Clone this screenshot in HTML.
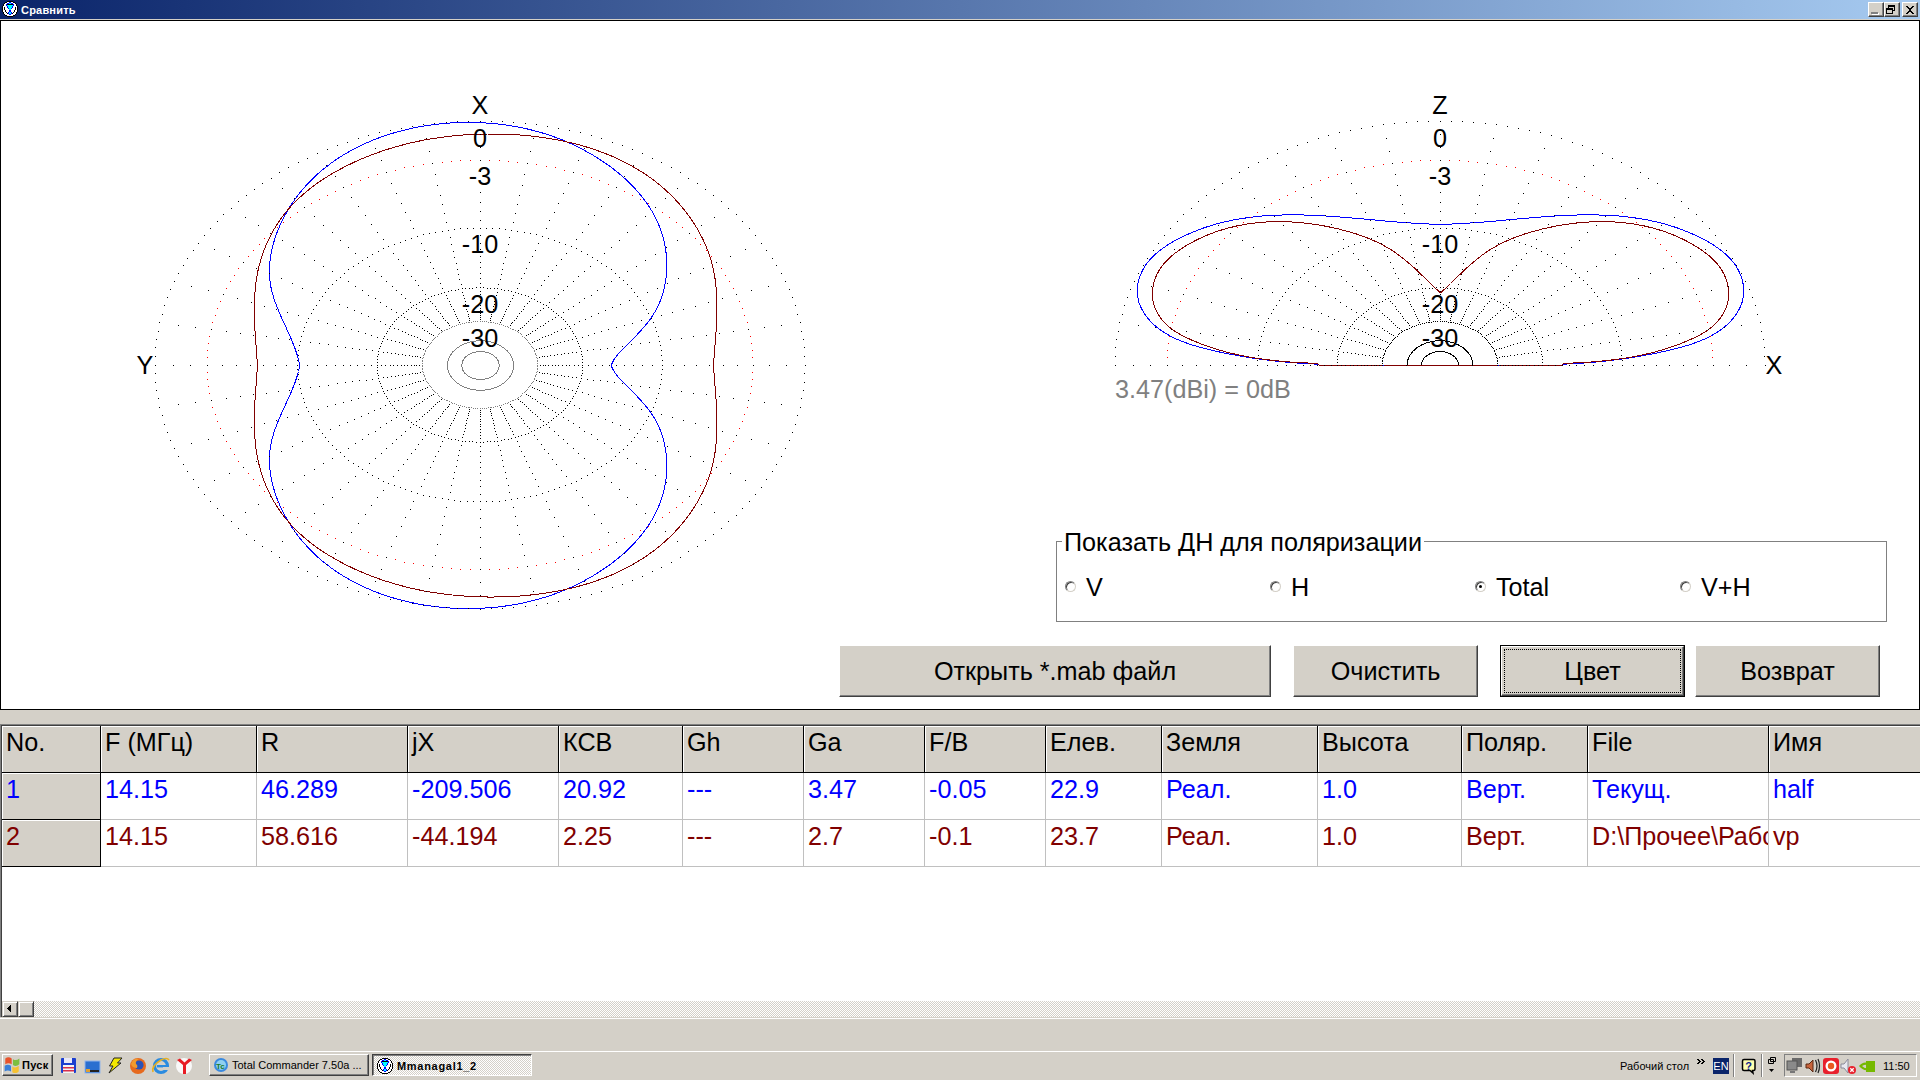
<!DOCTYPE html>
<html><head><meta charset="utf-8"><title>compare</title>
<style>
html,body{margin:0;padding:0}
body{width:1920px;height:1080px;overflow:hidden;background:#d4d0c8;position:relative;font-family:"Liberation Sans",sans-serif;color:#000}
div,span{box-sizing:border-box}
.abs{position:absolute}
#title{position:absolute;left:0;top:0;width:1920px;height:19px;background:linear-gradient(90deg,#0a246a 0%,#a6caf0 100%)}
#title .t{position:absolute;left:21px;top:3px;font-size:11px;font-weight:bold;color:#fff;line-height:14px;letter-spacing:0.2px}
#panel{position:absolute;left:0;top:20px;width:1920px;height:690px;background:#fff;border:1px solid #000}
.plot{position:absolute;left:0;top:0}
.lbl{position:absolute;font-size:25.2px;line-height:24px;white-space:nowrap}
.btn{position:absolute;background:#d4d0c8;font-size:25.2px;line-height:24px;text-align:center;
 border-top:1px solid #fff;border-left:1px solid #fff;border-right:1px solid #404040;border-bottom:1px solid #404040;
 box-shadow:inset -1px -1px 0 #808080}
.grid{position:absolute;left:0;top:724px;width:1920px;height:293px;background:#fff}
.grid:before{content:"";position:absolute;left:0;top:0;right:0;bottom:0;border-top:1px solid #808080;border-left:1px solid #808080}
.grid:after{content:"";position:absolute;left:1px;top:1px;right:0;bottom:0;border-top:1px solid #404040;border-left:1px solid #404040}
.grid>div{position:absolute}

.cb{position:absolute;top:2px;width:16px;height:15px;background:#d4d0c8;border-top:1px solid #fff;border-left:1px solid #fff;border-right:1px solid #404040;border-bottom:1px solid #404040;box-shadow:inset -1px -1px 0 #808080}
.cb svg{position:absolute;left:0;top:0}
.gb{position:absolute;left:1056px;top:541px;width:831px;height:81px;border:1px solid #808080}
.gbc{background:#fff;padding:0 2px}
.radio{position:absolute;width:11px;height:11px;border-radius:50%;background:#fff;border:1px solid #808080;border-right-color:#d4d0c8;border-bottom-color:#d4d0c8;box-shadow:inset 1px 1px 0 #404040}
.radio i{position:absolute;left:3px;top:3px;width:3px;height:3px;border-radius:50%;background:#000;display:block}
.btn span{position:absolute;left:0;right:0;top:13px}
.btn b{position:absolute;left:2px;top:2px;right:2px;bottom:2px;border:1px dotted #000;display:block}
.btnfocus{position:absolute;background:#000}
.hc{top:2px;height:46px;background:#d4d0c8;font-size:25.2px;line-height:24px;padding:3px 0 0 3px;white-space:nowrap;overflow:hidden;
 border-top:1px solid #fff;border-left:1px solid #fff;box-shadow:1px 0 0 #000,0 1px 0 #000,1px 1px 0 #000}
.fc{left:2px;width:98px;height:46px;background:#d4d0c8;font-size:25.2px;line-height:24px;padding:3px 0 0 3px;border-top:1px solid #fff;border-left:1px solid #fff;box-shadow:1px 0 0 #000,0 1px 0 #000,1px 1px 0 #000}
.dc{height:47px;background:#fff;font-size:25.2px;line-height:24px;padding:4px 0 0 4px;white-space:nowrap;overflow:hidden;border-right:1px solid #c0c0c0;border-bottom:1px solid #c0c0c0}
.sbar{position:absolute;left:2px;top:1001px;width:1918px;height:16px;background:#eae8e3;
 background-image:repeating-conic-gradient(#fff 0% 25%,#d4d0c8 0% 50%);background-size:2px 2px}
.sbtn{position:absolute;top:1001px;width:16px;height:16px;background:#d4d0c8;border-top:1px solid #d4d0c8;border-left:1px solid #d4d0c8;border-right:1px solid #404040;border-bottom:1px solid #404040;box-shadow:inset 1px 1px 0 #fff,inset -1px -1px 0 #808080}
.sbtn svg{position:absolute;left:-1px;top:0}
.wline{position:absolute;left:0;width:1920px;height:1px;background:#fff}
#tb{position:absolute;left:0;top:0;width:1920px;height:1080px;pointer-events:none}
#tb:before{content:"";position:absolute;left:0;top:1051px;width:1920px;height:1px;background:#fff}
.start{position:absolute;left:2px;top:1054px;width:51px;height:22px;background:#d4d0c8;border-top:1px solid #fff;border-left:1px solid #fff;border-right:1px solid #404040;border-bottom:1px solid #404040;box-shadow:inset -1px -1px 0 #808080}
.start span{position:absolute;left:19px;top:3px;font-size:11px;font-weight:bold;line-height:14px;letter-spacing:0.3px}
.ql{position:absolute;left:60px;top:1055px}
.tbtn{position:absolute;top:1054px;height:22px;background:#d4d0c8;border-top:1px solid #fff;border-left:1px solid #fff;border-right:1px solid #404040;border-bottom:1px solid #404040;box-shadow:inset -1px -1px 0 #808080}
.tbtn span{position:absolute;left:22px;top:3px;font-size:11px;line-height:14px;white-space:nowrap}
.tbtn.act{border-top:1px solid #404040;border-left:1px solid #404040;border-right:1px solid #fff;border-bottom:1px solid #fff;box-shadow:inset 1px 1px 0 #808080;background:#eae8e3;background-image:repeating-conic-gradient(#fff 0% 25%,#d4d0c8 0% 50%);background-size:2px 2px}
.tbtn.act span{font-weight:bold;top:4px;left:24px;letter-spacing:0.7px}
.tt{position:absolute;top:1059px;font-size:11px;line-height:14px;white-space:nowrap}
.en{position:absolute;left:1713px;top:1058px;width:16px;height:16px;background:#0a246a;color:#fff;font-size:11px;line-height:16px;text-align:center}
.sep{position:absolute;top:1054px;width:2px;height:23px;border-left:1px solid #808080;border-right:1px solid #fff}
.tray{position:absolute;left:1784px;top:1054px;width:133px;height:23px;border-top:1px solid #808080;border-left:1px solid #808080;border-right:1px solid #fff;border-bottom:1px solid #fff}
</style></head><body>
<div id="title"><svg width="16" height="16" viewBox="0 0 16 16" style="position:absolute;left:2px;top:1px"><g shape-rendering="crispEdges"><path d="M5 0h6v1h-6zM3 1h2v1h-2zM11 1h2v1h-2zM2 2h1v1h-1zM13 2h1v1h-1zM1 3h1v1h-1zM5 3h6v1h-6zM14 3h1v1h-1zM1 4h1v1h-1zM14 4h1v1h-1zM0 5h1v1h-1zM15 5h1v1h-1zM0 6h1v1h-1zM2 6h1v1h-1zM13 6h1v1h-1zM15 6h1v1h-1zM0 7h1v1h-1zM2 7h1v1h-1zM13 7h1v1h-1zM15 7h1v1h-1zM0 8h1v1h-1zM2 8h1v1h-1zM13 8h1v1h-1zM15 8h1v1h-1zM0 9h1v1h-1zM3 9h1v1h-1zM12 9h1v1h-1zM15 9h1v1h-1zM0 10h1v1h-1zM3 10h1v1h-1zM12 10h1v1h-1zM15 10h1v1h-1zM1 11h1v1h-1zM4 11h1v1h-1zM11 11h1v1h-1zM14 11h1v1h-1zM1 12h1v1h-1zM5 12h1v1h-1zM10 12h1v1h-1zM14 12h1v1h-1zM2 13h1v1h-1zM13 13h1v1h-1zM3 14h2v1h-2zM11 14h2v1h-2zM5 15h6v1h-6z" fill="#000"/><path d="M5 1h2v1h-2zM9 1h2v1h-2zM3 2h2v1h-2zM11 2h2v1h-2zM2 3h2v1h-2zM12 3h2v1h-2zM2 4h2v1h-2zM12 4h2v1h-2zM1 5h4v1h-4zM11 5h4v1h-4zM1 6h1v1h-1zM3 6h2v1h-2zM11 6h2v1h-2zM14 6h1v1h-1zM1 7h1v1h-1zM3 7h3v1h-3zM10 7h3v1h-3zM14 7h1v1h-1zM1 8h1v1h-1zM3 8h4v1h-4zM9 8h4v1h-4zM14 8h1v1h-1zM1 9h2v1h-2zM4 9h3v1h-3zM9 9h3v1h-3zM13 9h2v1h-2zM1 10h2v1h-2zM4 10h3v1h-3zM9 10h3v1h-3zM13 10h2v1h-2zM2 11h2v1h-2zM5 11h1v1h-1zM10 11h1v1h-1zM12 11h2v1h-2zM2 12h3v1h-3zM11 12h3v1h-3zM3 13h4v1h-4zM9 13h4v1h-4zM5 14h6v1h-6z" fill="#fff"/><path d="M7 1h2v1h-2zM5 2h2v1h-2zM9 2h2v1h-2zM4 3h1v1h-1zM11 3h1v1h-1zM4 4h1v1h-1zM11 4h1v1h-1zM5 5h1v1h-1zM10 5h1v1h-1zM5 6h1v1h-1zM10 6h1v1h-1zM6 7h1v1h-1zM9 7h1v1h-1zM7 9h2v1h-2zM7 10h2v1h-2zM6 11h1v1h-1zM9 11h1v1h-1zM6 12h1v1h-1zM9 12h1v1h-1zM7 13h2v1h-2z" fill="#00f"/><path d="M7 2h2v1h-2zM5 4h6v1h-6zM6 5h4v1h-4zM6 6h4v1h-4zM7 7h2v1h-2zM7 8h2v1h-2zM7 11h2v1h-2zM7 12h2v1h-2z" fill="#0ff"/></g></svg><span class="t">Сравнить</span>
<div class="cb" style="left:1868px"><svg width="14" height="13" viewBox="0 0 14 13" shape-rendering="crispEdges"><path d="M3 10h7v2h-7z" fill="#fff"/><path d="M2 9h7v2h-7z" fill="#808080"/></svg></div>
<div class="cb" style="left:1884px"><svg width="14" height="13" viewBox="0 0 14 13" shape-rendering="crispEdges"><path d="M3 2h7v6h-7z" fill="#000"/><path d="M4 4h5v3h-5z" fill="#d4d0c8"/><path d="M1 5h7v6h-7z" fill="#000"/><path d="M2 7h5v3h-5z" fill="#d4d0c8"/></svg></div>
<div class="cb" style="left:1902px"><svg width="14" height="13" viewBox="0 0 14 13" shape-rendering="crispEdges"><path d="M3 3h1v1h-1zM4 3h1v1h-1zM9 3h1v1h-1zM10 3h1v1h-1zM4 4h1v1h-1zM5 4h1v1h-1zM8 4h1v1h-1zM9 4h1v1h-1zM5 5h1v1h-1zM6 5h1v1h-1zM7 5h1v1h-1zM8 5h1v1h-1zM6 6h1v1h-1zM7 6h1v1h-1zM6 7h1v1h-1zM7 7h1v1h-1zM5 8h1v1h-1zM6 8h1v1h-1zM7 8h1v1h-1zM8 8h1v1h-1zM4 9h1v1h-1zM5 9h1v1h-1zM8 9h1v1h-1zM9 9h1v1h-1zM3 10h1v1h-1zM4 10h1v1h-1zM9 10h1v1h-1zM10 10h1v1h-1z" fill="#000"/></svg></div>
</div>
<div id="panel">
<svg class="plot" width="1918" height="688" viewBox="1 21 1918 688" shape-rendering="crispEdges">
<path d="M299.8 365.5L299.2 362.5L298.5 359.5L297.6 356.5L296.7 353.5L295.7 350.6L294.7 347.6L293.5 344.6L292.3 341.7L291.1 338.7L289.8 335.8L288.5 332.8L287.1 329.9L285.8 326.9L284.4 323.9L283.1 321.0L281.7 318.0L280.4 315.0L279.1 312.1L277.9 309.1L276.7 306.1L275.5 303.1L274.5 300.1L273.5 297.0L272.6 294.0L271.8 290.9L271.1 287.9L270.5 284.8L270.1 281.6L269.8 278.5L269.5 275.4L269.4 272.2L269.5 269.1L269.6 265.9L269.8 262.8L270.2 259.6L270.6 256.4L271.1 253.3L271.8 250.1L272.5 247.0L273.3 243.9L274.2 240.8L275.2 237.7L276.2 234.6L277.4 231.6L278.6 228.6L279.9 225.6L281.2 222.6L282.6 219.7L284.1 216.8L285.7 214.0L287.3 211.2L288.9 208.4L290.6 205.7L292.4 203.0L294.2 200.4L296.0 197.8L297.9 195.3L299.9 192.8L301.8 190.4L303.9 188.0L306.0 185.7L308.1 183.4L310.3 181.1L312.5 178.9L314.7 176.7L317.0 174.6L319.4 172.5L321.7 170.5L324.1 168.5L326.6 166.6L329.1 164.7L331.6 162.8L334.1 161.0L336.7 159.2L339.3 157.5L342.0 155.8L344.7 154.2L347.4 152.6L350.1 151.0L352.9 149.5L355.7 148.1L358.5 146.6L361.4 145.3L364.3 143.9L367.2 142.6L370.1 141.4L373.0 140.1L376.0 139.0L379.0 137.8L382.0 136.7L385.0 135.7L388.1 134.7L391.2 133.7L394.2 132.8L397.3 131.9L400.5 131.1L403.6 130.3L406.7 129.5L409.9 128.8L413.0 128.1L416.2 127.4L419.4 126.8L422.6 126.3L425.8 125.7L429.0 125.2L432.2 124.8L435.5 124.4L438.7 124.0L441.9 123.7L445.2 123.4L448.4 123.1L451.6 122.9L454.9 122.8L458.1 122.6L461.4 122.5L464.6 122.4L467.8 122.4L471.1 122.4L474.3 122.5L477.5 122.6L480.7 122.7L483.9 122.9L487.1 123.1L490.3 123.3L493.5 123.6L496.7 123.9L499.9 124.2L503.0 124.6L506.2 125.1L509.3 125.5L512.4 126.0L515.6 126.6L518.7 127.1L521.8 127.8L524.8 128.4L527.9 129.1L531.0 129.9L534.0 130.6L537.1 131.5L540.1 132.3L543.1 133.2L546.1 134.1L549.1 135.1L552.1 136.1L555.1 137.2L558.0 138.3L560.9 139.4L563.9 140.6L566.8 141.8L569.7 143.1L572.5 144.4L575.4 145.8L578.2 147.1L581.1 148.6L583.9 150.1L586.6 151.6L589.4 153.1L592.2 154.7L594.9 156.4L597.6 158.1L600.3 159.8L603.0 161.6L605.7 163.4L608.3 165.2L610.9 167.1L613.5 169.1L616.0 171.1L618.5 173.1L621.0 175.2L623.4 177.3L625.8 179.4L628.1 181.6L630.4 183.9L632.7 186.2L634.9 188.5L637.0 190.9L639.1 193.3L641.1 195.7L643.1 198.2L645.0 200.7L646.8 203.3L648.6 205.9L650.3 208.6L652.0 211.3L653.5 214.0L655.0 216.8L656.4 219.6L657.7 222.5L659.0 225.4L660.1 228.3L661.2 231.3L662.2 234.3L663.1 237.4L663.9 240.5L664.6 243.6L665.2 246.8L665.7 250.0L666.1 253.2L666.4 256.4L666.6 259.6L666.7 262.9L666.8 266.1L666.7 269.3L666.5 272.6L666.2 275.8L665.9 279.0L665.4 282.2L664.8 285.4L664.1 288.5L663.3 291.6L662.4 294.7L661.4 297.7L660.3 300.7L659.1 303.6L657.8 306.5L656.4 309.3L654.8 312.1L653.2 314.7L651.5 317.4L649.7 319.9L647.7 322.5L645.8 324.9L643.7 327.3L641.6 329.7L639.5 332.1L637.3 334.4L635.1 336.7L632.8 339.0L630.6 341.3L628.3 343.5L626.0 345.8L623.8 348.1L621.5 350.3L619.4 352.6L617.4 355.0L615.5 357.4L613.8 360.0L612.4 362.7L611.2 365.5L612.4 368.3L613.8 371.0L615.5 373.6L617.4 376.0L619.4 378.4L621.5 380.7L623.8 382.9L626.0 385.2L628.3 387.5L630.6 389.7L632.8 392.0L635.1 394.3L637.3 396.6L639.5 398.9L641.6 401.3L643.7 403.7L645.8 406.1L647.7 408.5L649.7 411.1L651.5 413.6L653.2 416.3L654.8 418.9L656.4 421.7L657.8 424.5L659.1 427.4L660.3 430.3L661.4 433.3L662.4 436.3L663.3 439.4L664.1 442.5L664.8 445.6L665.4 448.8L665.9 452.0L666.2 455.2L666.5 458.4L666.7 461.7L666.8 464.9L666.7 468.1L666.6 471.4L666.4 474.6L666.1 477.8L665.7 481.0L665.2 484.2L664.6 487.4L663.9 490.5L663.1 493.6L662.2 496.7L661.2 499.7L660.1 502.7L659.0 505.6L657.7 508.5L656.4 511.4L655.0 514.2L653.5 517.0L652.0 519.7L650.3 522.4L648.6 525.1L646.8 527.7L645.0 530.3L643.1 532.8L641.1 535.3L639.1 537.7L637.0 540.1L634.9 542.5L632.7 544.8L630.4 547.1L628.1 549.4L625.8 551.6L623.4 553.7L621.0 555.8L618.5 557.9L616.0 559.9L613.5 561.9L610.9 563.9L608.3 565.8L605.7 567.6L603.0 569.4L600.3 571.2L597.6 572.9L594.9 574.6L592.2 576.3L589.4 577.9L586.6 579.4L583.9 580.9L581.1 582.4L578.2 583.9L575.4 585.2L572.5 586.6L569.7 587.9L566.8 589.2L563.9 590.4L560.9 591.6L558.0 592.7L555.1 593.8L552.1 594.9L549.1 595.9L546.1 596.9L543.1 597.8L540.1 598.7L537.1 599.5L534.0 600.4L531.0 601.1L527.9 601.9L524.8 602.6L521.8 603.2L518.7 603.9L515.6 604.4L512.4 605.0L509.3 605.5L506.2 605.9L503.0 606.4L499.9 606.8L496.7 607.1L493.5 607.4L490.3 607.7L487.1 607.9L483.9 608.1L480.7 608.3L477.5 608.4L474.3 608.5L471.1 608.6L467.8 608.6L464.6 608.6L461.4 608.5L458.1 608.4L454.9 608.2L451.6 608.1L448.4 607.9L445.2 607.6L441.9 607.3L438.7 607.0L435.5 606.6L432.2 606.2L429.0 605.8L425.8 605.3L422.6 604.7L419.4 604.2L416.2 603.6L413.0 602.9L409.9 602.2L406.7 601.5L403.6 600.7L400.5 599.9L397.3 599.1L394.2 598.2L391.2 597.3L388.1 596.3L385.0 595.3L382.0 594.3L379.0 593.2L376.0 592.0L373.0 590.9L370.1 589.6L367.2 588.4L364.3 587.1L361.4 585.7L358.5 584.4L355.7 582.9L352.9 581.5L350.1 580.0L347.4 578.4L344.7 576.8L342.0 575.2L339.3 573.5L336.7 571.8L334.1 570.0L331.6 568.2L329.1 566.3L326.6 564.4L324.1 562.5L321.7 560.5L319.4 558.5L317.0 556.4L314.7 554.3L312.5 552.1L310.3 549.9L308.1 547.6L306.0 545.3L303.9 543.0L301.8 540.6L299.9 538.2L297.9 535.7L296.0 533.2L294.2 530.6L292.4 528.0L290.6 525.3L288.9 522.6L287.3 519.8L285.7 517.0L284.1 514.2L282.6 511.3L281.2 508.4L279.9 505.4L278.6 502.4L277.4 499.4L276.2 496.4L275.2 493.3L274.2 490.2L273.3 487.1L272.5 484.0L271.8 480.9L271.1 477.7L270.6 474.6L270.2 471.4L269.8 468.2L269.6 465.1L269.5 461.9L269.4 458.8L269.5 455.6L269.8 452.5L270.1 449.4L270.5 446.2L271.1 443.1L271.8 440.1L272.6 437.0L273.5 434.0L274.5 430.9L275.5 427.9L276.7 424.9L277.9 421.9L279.1 418.9L280.4 416.0L281.7 413.0L283.1 410.0L284.4 407.1L285.8 404.1L287.1 401.1L288.5 398.2L289.8 395.2L291.1 392.3L292.3 389.3L293.5 386.4L294.7 383.4L295.7 380.4L296.7 377.5L297.6 374.5L298.5 371.5L299.2 368.5Z" fill="none" stroke="#00f" stroke-width="1"/>
<path d="M257.5 365.5L257.3 362.4L257.0 359.3L256.8 356.1L256.6 353.0L256.3 349.8L256.1 346.6L255.9 343.4L255.6 340.2L255.4 337.0L255.2 333.8L255.0 330.6L254.8 327.3L254.7 324.1L254.6 320.9L254.5 317.6L254.4 314.4L254.4 311.2L254.4 307.9L254.4 304.7L254.5 301.5L254.6 298.2L254.8 295.0L255.0 291.8L255.3 288.6L255.6 285.4L256.0 282.2L256.5 279.1L257.0 275.9L257.6 272.8L258.2 269.6L259.0 266.5L259.8 263.5L260.6 260.4L261.6 257.4L262.6 254.3L263.6 251.3L264.8 248.4L266.0 245.4L267.2 242.5L268.6 239.6L270.0 236.8L271.4 234.0L272.9 231.2L274.5 228.5L276.2 225.8L277.9 223.1L279.7 220.5L281.5 217.9L283.4 215.3L285.3 212.8L287.4 210.4L289.4 208.0L291.6 205.6L293.7 203.3L296.0 201.1L298.3 198.8L300.6 196.7L303.0 194.5L305.4 192.4L307.9 190.4L310.4 188.4L312.9 186.4L315.5 184.5L318.2 182.6L320.8 180.8L323.5 179.0L326.2 177.3L329.0 175.6L331.8 173.9L334.6 172.3L337.4 170.7L340.3 169.1L343.2 167.6L346.1 166.1L349.0 164.7L351.9 163.3L354.8 161.9L357.8 160.6L360.7 159.3L363.7 158.0L366.7 156.8L369.7 155.6L372.7 154.5L375.7 153.4L378.7 152.3L381.7 151.2L384.7 150.2L387.7 149.3L390.7 148.3L393.7 147.4L396.8 146.5L399.8 145.7L402.9 144.9L405.9 144.1L409.0 143.3L412.0 142.6L415.1 141.9L418.2 141.3L421.3 140.6L424.3 140.0L427.4 139.5L430.5 138.9L433.6 138.4L436.8 138.0L439.9 137.5L443.0 137.1L446.1 136.7L449.3 136.3L452.4 136.0L455.6 135.7L458.7 135.4L461.9 135.1L465.1 134.9L468.3 134.7L471.5 134.5L474.7 134.4L477.9 134.3L481.1 134.2L484.3 134.1L487.5 134.0L490.8 134.0L494.0 134.0L497.2 134.1L500.5 134.1L503.7 134.2L507.0 134.3L510.2 134.5L513.5 134.6L516.7 134.8L520.0 135.0L523.2 135.3L526.5 135.6L529.7 135.9L533.0 136.3L536.2 136.6L539.4 137.0L542.7 137.5L545.9 138.0L549.1 138.5L552.3 139.0L555.5 139.6L558.7 140.2L561.9 140.8L565.1 141.5L568.2 142.2L571.4 142.9L574.5 143.7L577.6 144.5L580.8 145.3L583.8 146.2L586.9 147.1L590.0 148.1L593.0 149.1L596.1 150.1L599.1 151.2L602.1 152.3L605.1 153.4L608.0 154.6L611.0 155.8L613.9 157.1L616.8 158.4L619.6 159.7L622.5 161.1L625.3 162.5L628.1 164.0L630.9 165.5L633.6 167.0L636.4 168.6L639.0 170.3L641.7 171.9L644.3 173.6L647.0 175.4L649.5 177.2L652.1 179.0L654.6 180.9L657.1 182.9L659.5 184.8L661.9 186.9L664.3 188.9L666.7 191.1L669.0 193.2L671.2 195.4L673.5 197.7L675.7 200.0L677.8 202.4L680.0 204.7L682.0 207.2L684.1 209.7L686.0 212.2L688.0 214.8L689.9 217.4L691.7 220.0L693.5 222.7L695.2 225.4L696.9 228.1L698.5 230.9L700.0 233.7L701.5 236.6L703.0 239.5L704.3 242.4L705.6 245.3L706.8 248.3L708.0 251.2L709.1 254.2L710.1 257.3L711.0 260.3L711.9 263.4L712.7 266.5L713.4 269.6L714.0 272.7L714.6 275.9L715.1 279.0L715.5 282.2L715.9 285.4L716.2 288.6L716.4 291.8L716.6 295.0L716.7 298.2L716.8 301.4L716.9 304.7L716.9 307.9L716.9 311.1L716.8 314.4L716.7 317.6L716.6 320.8L716.4 324.1L716.3 327.3L716.1 330.6L715.9 333.8L715.6 337.0L715.4 340.2L715.2 343.4L714.9 346.6L714.7 349.8L714.4 353.0L714.2 356.1L713.9 359.3L713.7 362.4L713.5 365.5L713.7 368.6L713.9 371.7L714.2 374.9L714.4 378.0L714.7 381.2L714.9 384.4L715.2 387.6L715.4 390.8L715.6 394.0L715.9 397.2L716.1 400.4L716.3 403.7L716.4 406.9L716.6 410.2L716.7 413.4L716.8 416.6L716.9 419.9L716.9 423.1L716.9 426.3L716.8 429.6L716.7 432.8L716.6 436.0L716.4 439.2L716.2 442.4L715.9 445.6L715.5 448.8L715.1 452.0L714.6 455.1L714.0 458.3L713.4 461.4L712.7 464.5L711.9 467.6L711.0 470.7L710.1 473.7L709.1 476.8L708.0 479.8L706.8 482.7L705.6 485.7L704.3 488.6L703.0 491.5L701.5 494.4L700.0 497.3L698.5 500.1L696.9 502.9L695.2 505.6L693.5 508.3L691.7 511.0L689.9 513.6L688.0 516.2L686.0 518.8L684.1 521.3L682.0 523.8L680.0 526.3L677.8 528.6L675.7 531.0L673.5 533.3L671.2 535.6L669.0 537.8L666.7 539.9L664.3 542.1L661.9 544.1L659.5 546.2L657.1 548.1L654.6 550.1L652.1 552.0L649.5 553.8L647.0 555.6L644.3 557.4L641.7 559.1L639.0 560.7L636.4 562.4L633.6 564.0L630.9 565.5L628.1 567.0L625.3 568.5L622.5 569.9L619.6 571.3L616.8 572.6L613.9 573.9L611.0 575.2L608.0 576.4L605.1 577.6L602.1 578.7L599.1 579.8L596.1 580.9L593.0 581.9L590.0 582.9L586.9 583.9L583.8 584.8L580.8 585.7L577.6 586.5L574.5 587.3L571.4 588.1L568.2 588.8L565.1 589.5L561.9 590.2L558.7 590.8L555.5 591.4L552.3 592.0L549.1 592.5L545.9 593.0L542.7 593.5L539.4 594.0L536.2 594.4L533.0 594.7L529.7 595.1L526.5 595.4L523.2 595.7L520.0 596.0L516.7 596.2L513.5 596.4L510.2 596.5L507.0 596.7L503.7 596.8L500.5 596.9L497.2 596.9L494.0 597.0L490.8 597.0L487.5 597.0L484.3 596.9L481.1 596.8L477.9 596.7L474.7 596.6L471.5 596.5L468.3 596.3L465.1 596.1L461.9 595.9L458.7 595.6L455.6 595.3L452.4 595.0L449.3 594.7L446.1 594.3L443.0 593.9L439.9 593.5L436.8 593.0L433.6 592.6L430.5 592.1L427.4 591.5L424.3 591.0L421.3 590.4L418.2 589.7L415.1 589.1L412.0 588.4L409.0 587.7L405.9 586.9L402.9 586.1L399.8 585.3L396.8 584.5L393.7 583.6L390.7 582.7L387.7 581.7L384.7 580.8L381.7 579.8L378.7 578.7L375.7 577.6L372.7 576.5L369.7 575.4L366.7 574.2L363.7 573.0L360.7 571.7L357.8 570.4L354.8 569.1L351.9 567.7L349.0 566.3L346.1 564.9L343.2 563.4L340.3 561.9L337.4 560.3L334.6 558.7L331.8 557.1L329.0 555.4L326.2 553.7L323.5 552.0L320.8 550.2L318.2 548.4L315.5 546.5L312.9 544.6L310.4 542.6L307.9 540.6L305.4 538.6L303.0 536.5L300.6 534.3L298.3 532.2L296.0 529.9L293.7 527.7L291.6 525.4L289.4 523.0L287.4 520.6L285.3 518.2L283.4 515.7L281.5 513.1L279.7 510.5L277.9 507.9L276.2 505.2L274.5 502.5L272.9 499.8L271.4 497.0L270.0 494.2L268.6 491.4L267.2 488.5L266.0 485.6L264.8 482.6L263.6 479.7L262.6 476.7L261.6 473.6L260.6 470.6L259.8 467.5L259.0 464.5L258.2 461.4L257.6 458.2L257.0 455.1L256.5 451.9L256.0 448.8L255.6 445.6L255.3 442.4L255.0 439.2L254.8 436.0L254.6 432.8L254.5 429.5L254.4 426.3L254.4 423.1L254.4 419.8L254.4 416.6L254.5 413.4L254.6 410.1L254.7 406.9L254.8 403.7L255.0 400.4L255.2 397.2L255.4 394.0L255.6 390.8L255.9 387.6L256.1 384.4L256.3 381.2L256.6 378.0L256.8 374.9L257.0 371.7L257.3 368.6Z" fill="none" stroke="#800000" stroke-width="1"/>
<path d="M1384.4 365.5L1382.0 365.5L1379.6 365.5L1377.1 365.5L1374.7 365.5L1372.3 365.5L1369.9 365.5L1367.5 365.5L1365.1 365.5L1362.7 365.5L1360.3 365.5L1358.0 365.5L1355.6 365.5L1353.2 365.5L1350.8 365.5L1348.5 365.5L1346.1 365.5L1343.7 365.5L1341.4 365.5L1339.0 365.5L1336.7 365.5L1334.3 365.5L1332.0 365.5L1329.6 365.5L1327.3 365.5L1324.9 365.5L1322.6 365.5L1320.2 365.5L1317.9 364.3L1315.6 364.1L1313.2 364.0L1310.9 363.9L1308.6 363.8L1306.2 363.6L1303.9 363.5L1301.6 363.3L1299.2 363.1L1296.9 363.0L1294.6 362.8L1292.3 362.6L1289.9 362.4L1287.6 362.2L1285.3 362.0L1283.0 361.8L1280.7 361.5L1278.3 361.3L1276.0 361.1L1273.7 360.8L1271.4 360.5L1269.0 360.3L1266.7 360.0L1264.4 359.7L1262.1 359.4L1259.7 359.1L1257.4 358.7L1255.1 358.4L1252.7 358.1L1250.4 357.7L1248.1 357.3L1245.7 357.0L1243.4 356.6L1241.1 356.2L1238.7 355.8L1236.4 355.3L1234.0 354.9L1231.7 354.5L1229.3 354.0L1227.0 353.5L1224.6 353.1L1222.3 352.6L1219.9 352.1L1217.6 351.5L1215.2 351.0L1212.8 350.5L1210.5 349.9L1208.1 349.3L1205.7 348.7L1203.4 348.1L1201.0 347.5L1198.6 346.9L1196.3 346.2L1193.9 345.5L1191.6 344.8L1189.3 344.0L1187.0 343.2L1184.8 342.4L1182.5 341.6L1180.3 340.7L1178.1 339.8L1175.9 338.8L1173.8 337.8L1171.7 336.8L1169.6 335.7L1167.5 334.5L1165.5 333.3L1163.6 332.1L1161.6 330.8L1159.8 329.5L1157.9 328.1L1156.2 326.6L1154.4 325.1L1152.7 323.6L1151.1 321.9L1149.6 320.3L1148.0 318.5L1146.6 316.7L1145.2 314.8L1143.9 312.8L1142.7 310.8L1141.6 308.8L1140.6 306.6L1139.7 304.5L1138.9 302.3L1138.3 300.1L1137.9 297.8L1137.5 295.5L1137.3 293.2L1137.3 290.9L1137.4 288.6L1137.6 286.2L1137.9 283.9L1138.4 281.6L1139.0 279.4L1139.7 277.1L1140.5 274.9L1141.4 272.8L1142.4 270.7L1143.5 268.6L1144.7 266.7L1145.9 264.7L1147.3 262.9L1148.8 261.1L1150.3 259.3L1151.9 257.6L1153.5 255.9L1155.3 254.3L1157.0 252.8L1158.9 251.2L1160.8 249.8L1162.7 248.3L1164.7 247.0L1166.7 245.6L1168.7 244.3L1170.8 243.0L1172.9 241.8L1175.0 240.6L1177.2 239.5L1179.4 238.3L1181.5 237.3L1183.7 236.2L1185.9 235.2L1188.1 234.2L1190.3 233.2L1192.5 232.3L1194.7 231.4L1196.9 230.5L1199.2 229.6L1201.4 228.8L1203.6 228.0L1205.9 227.2L1208.1 226.5L1210.4 225.8L1212.7 225.1L1214.9 224.4L1217.2 223.8L1219.5 223.2L1221.8 222.6L1224.1 222.0L1226.4 221.5L1228.7 221.0L1231.0 220.5L1233.3 220.0L1235.6 219.6L1237.9 219.2L1240.2 218.8L1242.6 218.4L1244.9 218.1L1247.2 217.7L1249.6 217.4L1251.9 217.1L1254.2 216.8L1256.6 216.6L1258.9 216.4L1261.2 216.1L1263.6 215.9L1265.9 215.8L1268.3 215.6L1270.6 215.5L1273.0 215.3L1275.3 215.2L1277.7 215.1L1280.0 215.0L1282.4 215.0L1284.7 214.9L1287.1 214.9L1289.4 214.9L1291.8 214.8L1294.1 214.9L1296.5 214.9L1298.8 214.9L1301.2 214.9L1303.6 215.0L1305.9 215.1L1308.3 215.1L1310.6 215.2L1313.0 215.3L1315.4 215.4L1317.7 215.5L1320.1 215.7L1322.5 215.8L1324.8 215.9L1327.2 216.1L1329.6 216.2L1331.9 216.4L1334.3 216.6L1336.6 216.7L1339.0 216.9L1341.4 217.1L1343.7 217.3L1346.1 217.5L1348.5 217.7L1350.8 217.9L1353.2 218.1L1355.6 218.3L1358.0 218.5L1360.3 218.7L1362.7 218.9L1365.1 219.1L1367.4 219.4L1369.8 219.6L1372.1 219.8L1374.5 220.0L1376.9 220.2L1379.2 220.4L1381.6 220.6L1384.0 220.9L1386.3 221.1L1388.7 221.3L1391.1 221.5L1393.4 221.7L1395.8 221.9L1398.1 222.1L1400.5 222.2L1402.9 222.4L1405.2 222.6L1407.6 222.8L1409.9 222.9L1412.3 223.1L1414.7 223.2L1417.0 223.4L1419.4 223.5L1421.7 223.6L1424.1 223.8L1426.4 223.9L1428.8 224.0L1431.1 224.1L1433.5 224.1L1435.8 224.2L1438.2 224.3L1440.5 224.3L1442.8 224.3L1445.2 224.2L1447.5 224.1L1449.9 224.1L1452.2 224.0L1454.6 223.9L1456.9 223.8L1459.3 223.6L1461.6 223.5L1464.0 223.4L1466.3 223.2L1468.7 223.1L1471.1 222.9L1473.4 222.8L1475.8 222.6L1478.1 222.4L1480.5 222.2L1482.9 222.1L1485.2 221.9L1487.6 221.7L1489.9 221.5L1492.3 221.3L1494.7 221.1L1497.0 220.9L1499.4 220.6L1501.8 220.4L1504.1 220.2L1506.5 220.0L1508.9 219.8L1511.2 219.6L1513.6 219.4L1515.9 219.1L1518.3 218.9L1520.7 218.7L1523.0 218.5L1525.4 218.3L1527.8 218.1L1530.2 217.9L1532.5 217.7L1534.9 217.5L1537.3 217.3L1539.6 217.1L1542.0 216.9L1544.4 216.7L1546.7 216.6L1549.1 216.4L1551.4 216.2L1553.8 216.1L1556.2 215.9L1558.5 215.8L1560.9 215.7L1563.3 215.5L1565.6 215.4L1568.0 215.3L1570.4 215.2L1572.7 215.1L1575.1 215.1L1577.4 215.0L1579.8 214.9L1582.2 214.9L1584.5 214.9L1586.9 214.9L1589.2 214.8L1591.6 214.9L1593.9 214.9L1596.3 214.9L1598.6 215.0L1601.0 215.0L1603.3 215.1L1605.7 215.2L1608.0 215.3L1610.4 215.5L1612.7 215.6L1615.1 215.8L1617.4 215.9L1619.8 216.1L1622.1 216.4L1624.4 216.6L1626.8 216.8L1629.1 217.1L1631.4 217.4L1633.8 217.7L1636.1 218.1L1638.4 218.4L1640.8 218.8L1643.1 219.2L1645.4 219.6L1647.7 220.0L1650.0 220.5L1652.3 221.0L1654.6 221.5L1656.9 222.0L1659.2 222.6L1661.5 223.2L1663.8 223.8L1666.1 224.4L1668.3 225.1L1670.6 225.8L1672.9 226.5L1675.1 227.2L1677.4 228.0L1679.6 228.8L1681.8 229.6L1684.1 230.5L1686.3 231.4L1688.5 232.3L1690.7 233.2L1692.9 234.2L1695.1 235.2L1697.3 236.2L1699.5 237.3L1701.6 238.3L1703.8 239.5L1706.0 240.6L1708.1 241.8L1710.2 243.0L1712.3 244.3L1714.3 245.6L1716.3 247.0L1718.3 248.3L1720.2 249.8L1722.1 251.2L1724.0 252.8L1725.7 254.3L1727.5 255.9L1729.1 257.6L1730.7 259.3L1732.2 261.1L1733.7 262.9L1735.1 264.7L1736.3 266.7L1737.5 268.6L1738.6 270.7L1739.6 272.8L1740.5 274.9L1741.3 277.1L1742.0 279.4L1742.6 281.6L1743.1 283.9L1743.4 286.2L1743.6 288.6L1743.7 290.9L1743.7 293.2L1743.5 295.5L1743.1 297.8L1742.7 300.1L1742.1 302.3L1741.3 304.5L1740.4 306.6L1739.4 308.8L1738.3 310.8L1737.1 312.8L1735.8 314.8L1734.4 316.7L1733.0 318.5L1731.4 320.3L1729.9 321.9L1728.3 323.6L1726.6 325.1L1724.8 326.6L1723.1 328.1L1721.2 329.5L1719.4 330.8L1717.4 332.1L1715.5 333.3L1713.5 334.5L1711.4 335.7L1709.3 336.8L1707.2 337.8L1705.1 338.8L1702.9 339.8L1700.7 340.7L1698.5 341.6L1696.2 342.4L1694.0 343.2L1691.7 344.0L1689.4 344.8L1687.1 345.5L1684.7 346.2L1682.4 346.9L1680.0 347.5L1677.6 348.1L1675.3 348.7L1672.9 349.3L1670.5 349.9L1668.2 350.5L1665.8 351.0L1663.4 351.5L1661.1 352.1L1658.7 352.6L1656.4 353.1L1654.0 353.5L1651.7 354.0L1649.3 354.5L1647.0 354.9L1644.6 355.3L1642.3 355.8L1639.9 356.2L1637.6 356.6L1635.3 357.0L1632.9 357.3L1630.6 357.7L1628.3 358.1L1625.9 358.4L1623.6 358.7L1621.3 359.1L1618.9 359.4L1616.6 359.7L1614.3 360.0L1612.0 360.3L1609.6 360.5L1607.3 360.8L1605.0 361.1L1602.7 361.3L1600.3 361.5L1598.0 361.8L1595.7 362.0L1593.4 362.2L1591.1 362.4L1588.7 362.6L1586.4 362.8L1584.1 363.0L1581.8 363.1L1579.4 363.3L1577.1 363.5L1574.8 363.6L1572.4 363.8L1570.1 363.9L1567.8 364.0L1565.4 364.1L1563.1 364.3L1560.8 365.5L1558.4 365.5L1556.1 365.5L1553.7 365.5L1551.4 365.5L1549.0 365.5L1546.7 365.5L1544.3 365.5L1542.0 365.5L1539.6 365.5L1537.3 365.5L1534.9 365.5L1532.5 365.5L1530.2 365.5L1527.8 365.5L1525.4 365.5L1523.0 365.5L1520.7 365.5L1518.3 365.5L1515.9 365.5L1513.5 365.5L1511.1 365.5L1508.7 365.5L1506.3 365.5L1503.9 365.5L1501.4 365.5L1499.0 365.5L1496.6 365.5" fill="none" stroke="#00f" stroke-width="1"/>
<path d="M1384.4 365.5L1382.1 365.5L1379.8 365.5L1377.5 365.5L1375.2 365.5L1372.9 365.5L1370.6 365.5L1368.3 365.5L1366.0 365.5L1363.7 365.5L1361.3 365.5L1359.0 365.5L1356.7 365.5L1354.4 365.5L1352.1 365.5L1349.7 365.5L1347.4 365.5L1345.1 365.5L1342.8 365.5L1340.4 365.5L1338.1 365.5L1335.8 365.5L1333.4 365.5L1331.1 365.5L1328.8 365.5L1326.4 365.5L1324.1 365.5L1321.8 365.5L1319.4 365.5L1317.1 363.4L1314.8 363.4L1312.4 363.3L1310.1 363.2L1307.8 363.0L1305.4 362.9L1303.1 362.8L1300.8 362.7L1298.5 362.5L1296.1 362.4L1293.8 362.2L1291.5 362.1L1289.2 361.9L1286.8 361.7L1284.5 361.5L1282.2 361.3L1279.9 361.1L1277.6 360.9L1275.2 360.6L1272.9 360.4L1270.6 360.1L1268.3 359.9L1266.0 359.6L1263.7 359.3L1261.4 358.9L1259.1 358.6L1256.8 358.3L1254.5 357.9L1252.2 357.5L1249.9 357.1L1247.6 356.7L1245.4 356.3L1243.1 355.9L1240.8 355.4L1238.5 354.9L1236.3 354.4L1234.0 353.9L1231.7 353.4L1229.5 352.8L1227.2 352.2L1225.0 351.7L1222.7 351.0L1220.5 350.4L1218.3 349.7L1216.0 349.1L1213.8 348.4L1211.6 347.6L1209.4 346.9L1207.2 346.1L1204.9 345.3L1202.7 344.5L1200.5 343.7L1198.4 342.8L1196.2 341.9L1194.0 341.0L1191.8 340.1L1189.6 339.1L1187.5 338.1L1185.3 337.1L1183.2 336.0L1181.1 334.9L1179.0 333.7L1177.0 332.5L1175.0 331.3L1173.1 329.9L1171.2 328.6L1169.4 327.1L1167.6 325.6L1165.9 324.0L1164.3 322.4L1162.8 320.7L1161.4 318.9L1160.0 317.1L1158.8 315.2L1157.6 313.3L1156.6 311.3L1155.6 309.3L1154.8 307.2L1154.1 305.1L1153.5 303.0L1153.0 300.8L1152.7 298.6L1152.5 296.4L1152.4 294.2L1152.4 291.9L1152.6 289.7L1152.9 287.4L1153.3 285.2L1153.8 283.0L1154.4 280.8L1155.2 278.6L1156.0 276.5L1156.9 274.4L1158.0 272.4L1159.1 270.4L1160.3 268.4L1161.7 266.6L1163.1 264.7L1164.6 263.0L1166.1 261.3L1167.7 259.6L1169.4 258.0L1171.2 256.4L1173.0 254.9L1174.8 253.4L1176.7 252.0L1178.7 250.6L1180.6 249.2L1182.6 247.9L1184.6 246.6L1186.7 245.4L1188.7 244.2L1190.8 243.0L1192.9 241.9L1195.0 240.8L1197.1 239.7L1199.2 238.7L1201.3 237.7L1203.5 236.7L1205.6 235.8L1207.8 234.9L1209.9 234.0L1212.1 233.2L1214.3 232.4L1216.5 231.6L1218.7 230.9L1220.9 230.2L1223.1 229.5L1225.3 228.8L1227.6 228.2L1229.8 227.6L1232.1 227.1L1234.3 226.5L1236.6 226.0L1238.8 225.5L1241.1 225.1L1243.4 224.7L1245.7 224.3L1248.0 223.9L1250.2 223.6L1252.5 223.3L1254.8 223.0L1257.1 222.7L1259.5 222.5L1261.8 222.3L1264.1 222.1L1266.4 222.0L1268.7 221.9L1271.0 221.8L1273.4 221.7L1275.7 221.7L1278.0 221.6L1280.3 221.6L1282.7 221.7L1285.0 221.7L1287.3 221.8L1289.7 221.9L1292.0 222.0L1294.3 222.1L1296.7 222.3L1299.0 222.5L1301.3 222.7L1303.6 222.9L1306.0 223.2L1308.3 223.5L1310.6 223.8L1312.9 224.1L1315.2 224.4L1317.5 224.8L1319.9 225.2L1322.2 225.6L1324.5 226.0L1326.7 226.4L1329.0 226.9L1331.3 227.4L1333.6 227.9L1335.9 228.4L1338.2 228.9L1340.4 229.5L1342.7 230.1L1344.9 230.6L1347.2 231.3L1349.4 231.9L1351.6 232.5L1353.8 233.2L1356.1 233.9L1358.3 234.6L1360.4 235.4L1362.6 236.1L1364.8 236.9L1366.9 237.8L1369.1 238.6L1371.2 239.5L1373.3 240.4L1375.4 241.4L1377.5 242.3L1379.5 243.3L1381.6 244.4L1383.6 245.5L1385.6 246.6L1387.6 247.7L1389.6 248.9L1391.6 250.1L1393.5 251.4L1395.4 252.7L1397.3 254.0L1399.2 255.4L1401.0 256.8L1402.9 258.2L1404.7 259.7L1406.5 261.2L1408.3 262.7L1410.1 264.2L1411.8 265.8L1413.6 267.3L1415.3 268.9L1417.0 270.5L1418.7 272.1L1420.4 273.8L1422.1 275.4L1423.8 277.0L1425.5 278.6L1427.2 280.3L1428.9 281.9L1430.5 283.5L1432.2 285.1L1433.9 286.7L1435.5 288.3L1437.2 289.9L1438.8 291.5L1440.5 293.0M1440.5 293.0L1442.2 291.5L1443.8 289.9L1445.5 288.3L1447.1 286.7L1448.8 285.1L1450.5 283.5L1452.1 281.9L1453.8 280.3L1455.5 278.6L1457.2 277.0L1458.9 275.4L1460.6 273.8L1462.3 272.1L1464.0 270.5L1465.7 268.9L1467.4 267.3L1469.2 265.8L1470.9 264.2L1472.7 262.7L1474.5 261.2L1476.3 259.7L1478.1 258.2L1480.0 256.8L1481.8 255.4L1483.7 254.0L1485.6 252.7L1487.5 251.4L1489.4 250.1L1491.4 248.9L1493.4 247.7L1495.4 246.6L1497.4 245.5L1499.4 244.4L1501.5 243.3L1503.5 242.3L1505.6 241.4L1507.7 240.4L1509.8 239.5L1511.9 238.6L1514.1 237.8L1516.2 236.9L1518.4 236.1L1520.6 235.4L1522.7 234.6L1524.9 233.9L1527.2 233.2L1529.4 232.5L1531.6 231.9L1533.8 231.3L1536.1 230.6L1538.3 230.1L1540.6 229.5L1542.8 228.9L1545.1 228.4L1547.4 227.9L1549.7 227.4L1552.0 226.9L1554.3 226.4L1556.5 226.0L1558.8 225.6L1561.1 225.2L1563.5 224.8L1565.8 224.4L1568.1 224.1L1570.4 223.8L1572.7 223.5L1575.0 223.2L1577.4 222.9L1579.7 222.7L1582.0 222.5L1584.3 222.3L1586.7 222.1L1589.0 222.0L1591.3 221.9L1593.7 221.8L1596.0 221.7L1598.3 221.7L1600.7 221.6L1603.0 221.6L1605.3 221.7L1607.6 221.7L1610.0 221.8L1612.3 221.9L1614.6 222.0L1616.9 222.1L1619.2 222.3L1621.5 222.5L1623.9 222.7L1626.2 223.0L1628.5 223.3L1630.8 223.6L1633.0 223.9L1635.3 224.3L1637.6 224.7L1639.9 225.1L1642.2 225.5L1644.4 226.0L1646.7 226.5L1648.9 227.1L1651.2 227.6L1653.4 228.2L1655.7 228.8L1657.9 229.5L1660.1 230.2L1662.3 230.9L1664.5 231.6L1666.7 232.4L1668.9 233.2L1671.1 234.0L1673.2 234.9L1675.4 235.8L1677.5 236.7L1679.7 237.7L1681.8 238.7L1683.9 239.7L1686.0 240.8L1688.1 241.9L1690.2 243.0L1692.3 244.2L1694.3 245.4L1696.4 246.6L1698.4 247.9L1700.4 249.2L1702.3 250.6L1704.3 252.0L1706.2 253.4L1708.0 254.9L1709.8 256.4L1711.6 258.0L1713.3 259.6L1714.9 261.3L1716.4 263.0L1717.9 264.7L1719.3 266.6L1720.7 268.4L1721.9 270.4L1723.0 272.4L1724.1 274.4L1725.0 276.5L1725.8 278.6L1726.6 280.8L1727.2 283.0L1727.7 285.2L1728.1 287.4L1728.4 289.7L1728.6 291.9L1728.6 294.2L1728.5 296.4L1728.3 298.6L1728.0 300.8L1727.5 303.0L1726.9 305.1L1726.2 307.2L1725.4 309.3L1724.4 311.3L1723.4 313.3L1722.2 315.2L1721.0 317.1L1719.6 318.9L1718.2 320.7L1716.7 322.4L1715.1 324.0L1713.4 325.6L1711.6 327.1L1709.8 328.6L1707.9 329.9L1706.0 331.3L1704.0 332.5L1702.0 333.7L1699.9 334.9L1697.8 336.0L1695.7 337.1L1693.5 338.1L1691.4 339.1L1689.2 340.1L1687.0 341.0L1684.8 341.9L1682.6 342.8L1680.5 343.7L1678.3 344.5L1676.1 345.3L1673.8 346.1L1671.6 346.9L1669.4 347.6L1667.2 348.4L1665.0 349.1L1662.7 349.7L1660.5 350.4L1658.3 351.0L1656.0 351.7L1653.8 352.2L1651.5 352.8L1649.3 353.4L1647.0 353.9L1644.7 354.4L1642.5 354.9L1640.2 355.4L1637.9 355.9L1635.6 356.3L1633.4 356.7L1631.1 357.1L1628.8 357.5L1626.5 357.9L1624.2 358.3L1621.9 358.6L1619.6 358.9L1617.3 359.3L1615.0 359.6L1612.7 359.9L1610.4 360.1L1608.1 360.4L1605.8 360.6L1603.4 360.9L1601.1 361.1L1598.8 361.3L1596.5 361.5L1594.2 361.7L1591.8 361.9L1589.5 362.1L1587.2 362.2L1584.9 362.4L1582.5 362.5L1580.2 362.7L1577.9 362.8L1575.6 362.9L1573.2 363.0L1570.9 363.2L1568.6 363.3L1566.2 363.4L1563.9 363.4L1561.6 365.5L1559.2 365.5L1556.9 365.5L1554.6 365.5L1552.2 365.5L1549.9 365.5L1547.6 365.5L1545.2 365.5L1542.9 365.5L1540.6 365.5L1538.2 365.5L1535.9 365.5L1533.6 365.5L1531.3 365.5L1528.9 365.5L1526.6 365.5L1524.3 365.5L1522.0 365.5L1519.7 365.5L1517.3 365.5L1515.0 365.5L1512.7 365.5L1510.4 365.5L1508.1 365.5L1505.8 365.5L1503.5 365.5L1501.2 365.5L1498.9 365.5L1496.6 365.5" fill="none" stroke="#800000" stroke-width="1"/>
<path d="M1322 365.5H1560" fill="none" stroke="#800000" stroke-width="1"/>
<path d="M1382 365h2v1h-2zM1497 365h2v1h-2z" fill="#00f"/>
<path d="M480 160h1v1h-1zM489 160h1v1h-1zM499 160h1v1h-1zM508 161h1v1h-1zM517 162h1v1h-1zM527 163h1v1h-1zM536 164h1v1h-1zM546 166h1v1h-1zM555 167h1v1h-1zM564 170h1v1h-1zM573 172h1v1h-1zM582 174h1v1h-1zM591 177h1v1h-1zM599 180h1v1h-1zM608 184h1v1h-1zM616 187h1v1h-1zM624 191h1v1h-1zM632 195h1v1h-1zM640 199h1v1h-1zM648 203h1v1h-1zM655 207h1v1h-1zM662 212h1v1h-1zM669 217h1v1h-1zM676 222h1v1h-1zM682 227h1v1h-1zM689 233h1v1h-1zM695 238h1v1h-1zM700 244h1v1h-1zM706 250h1v1h-1zM711 256h1v1h-1zM716 262h1v1h-1zM721 268h1v1h-1zM725 275h1v1h-1zM729 281h1v1h-1zM733 288h1v1h-1zM736 294h1v1h-1zM739 301h1v1h-1zM742 308h1v1h-1zM744 315h1v1h-1zM747 322h1v1h-1zM748 329h1v1h-1zM750 336h1v1h-1zM751 343h1v1h-1zM752 350h1v1h-1zM752 357h1v1h-1zM753 365h1v1h-1zM752 372h1v1h-1zM752 379h1v1h-1zM751 386h1v1h-1zM750 393h1v1h-1zM748 400h1v1h-1zM747 407h1v1h-1zM744 414h1v1h-1zM742 421h1v1h-1zM739 428h1v1h-1zM736 435h1v1h-1zM733 441h1v1h-1zM729 448h1v1h-1zM725 454h1v1h-1zM721 461h1v1h-1zM716 467h1v1h-1zM711 473h1v1h-1zM706 479h1v1h-1zM700 485h1v1h-1zM695 491h1v1h-1zM689 496h1v1h-1zM682 502h1v1h-1zM676 507h1v1h-1zM669 512h1v1h-1zM662 517h1v1h-1zM655 522h1v1h-1zM648 526h1v1h-1zM640 530h1v1h-1zM632 534h1v1h-1zM624 538h1v1h-1zM616 542h1v1h-1zM608 545h1v1h-1zM599 549h1v1h-1zM591 552h1v1h-1zM582 555h1v1h-1zM573 557h1v1h-1zM564 559h1v1h-1zM555 562h1v1h-1zM546 563h1v1h-1zM536 565h1v1h-1zM527 566h1v1h-1zM517 567h1v1h-1zM508 568h1v1h-1zM499 569h1v1h-1zM489 569h1v1h-1zM480 569h1v1h-1zM470 569h1v1h-1zM460 569h1v1h-1zM451 568h1v1h-1zM442 567h1v1h-1zM432 566h1v1h-1zM423 565h1v1h-1zM413 563h1v1h-1zM404 562h1v1h-1zM395 559h1v1h-1zM386 557h1v1h-1zM377 555h1v1h-1zM368 552h1v1h-1zM360 549h1v1h-1zM351 545h1v1h-1zM343 542h1v1h-1zM335 538h1v1h-1zM327 534h1v1h-1zM319 530h1v1h-1zM311 526h1v1h-1zM304 522h1v1h-1zM297 517h1v1h-1zM290 512h1v1h-1zM283 507h1v1h-1zM277 502h1v1h-1zM270 496h1v1h-1zM264 491h1v1h-1zM259 485h1v1h-1zM253 479h1v1h-1zM248 473h1v1h-1zM243 467h1v1h-1zM238 461h1v1h-1zM234 454h1v1h-1zM230 448h1v1h-1zM226 441h1v1h-1zM223 435h1v1h-1zM220 428h1v1h-1zM217 421h1v1h-1zM215 414h1v1h-1zM212 407h1v1h-1zM211 400h1v1h-1zM209 393h1v1h-1zM208 386h1v1h-1zM207 379h1v1h-1zM207 372h1v1h-1zM207 365h1v1h-1zM207 357h1v1h-1zM207 350h1v1h-1zM208 343h1v1h-1zM209 336h1v1h-1zM211 329h1v1h-1zM212 322h1v1h-1zM215 315h1v1h-1zM217 308h1v1h-1zM220 301h1v1h-1zM223 294h1v1h-1zM226 288h1v1h-1zM230 281h1v1h-1zM234 275h1v1h-1zM238 268h1v1h-1zM243 262h1v1h-1zM248 256h1v1h-1zM253 250h1v1h-1zM259 244h1v1h-1zM264 238h1v1h-1zM270 233h1v1h-1zM277 227h1v1h-1zM283 222h1v1h-1zM290 217h1v1h-1zM297 212h1v1h-1zM304 207h1v1h-1zM311 203h1v1h-1zM319 199h1v1h-1zM327 195h1v1h-1zM335 191h1v1h-1zM343 187h1v1h-1zM351 184h1v1h-1zM360 180h1v1h-1zM368 177h1v1h-1zM377 174h1v1h-1zM386 172h1v1h-1zM395 170h1v1h-1zM404 167h1v1h-1zM413 166h1v1h-1zM423 164h1v1h-1zM432 163h1v1h-1zM442 162h1v1h-1zM451 161h1v1h-1zM460 160h1v1h-1zM470 160h1v1h-1z" fill="#f00"/>
<path d="M480 321h1v1h-1zM482 321h1v1h-1zM484 321h1v1h-1zM486 321h1v1h-1zM488 322h1v1h-1zM490 322h1v1h-1zM491 322h1v1h-1zM493 322h1v1h-1zM495 323h1v1h-1zM497 323h1v1h-1zM499 324h1v1h-1zM501 324h1v1h-1zM503 325h1v1h-1zM505 326h1v1h-1zM507 326h1v1h-1zM508 327h1v1h-1zM510 328h1v1h-1zM512 329h1v1h-1zM513 329h1v1h-1zM515 330h1v1h-1zM517 331h1v1h-1zM518 332h1v1h-1zM520 333h1v1h-1zM521 334h1v1h-1zM522 336h1v1h-1zM524 337h1v1h-1zM525 338h1v1h-1zM526 339h1v1h-1zM527 340h1v1h-1zM528 342h1v1h-1zM529 343h1v1h-1zM530 344h1v1h-1zM531 346h1v1h-1zM532 347h1v1h-1zM533 348h1v1h-1zM534 350h1v1h-1zM534 351h1v1h-1zM535 353h1v1h-1zM535 354h1v1h-1zM536 355h1v1h-1zM536 357h1v1h-1zM537 358h1v1h-1zM537 360h1v1h-1zM537 361h1v1h-1zM537 363h1v1h-1zM537 365h1v1h-1zM537 366h1v1h-1zM537 368h1v1h-1zM537 369h1v1h-1zM537 371h1v1h-1zM536 372h1v1h-1zM536 374h1v1h-1zM535 375h1v1h-1zM535 376h1v1h-1zM534 378h1v1h-1zM534 379h1v1h-1zM533 381h1v1h-1zM532 382h1v1h-1zM531 383h1v1h-1zM530 385h1v1h-1zM529 386h1v1h-1zM528 387h1v1h-1zM527 389h1v1h-1zM526 390h1v1h-1zM525 391h1v1h-1zM524 392h1v1h-1zM522 393h1v1h-1zM521 395h1v1h-1zM520 396h1v1h-1zM518 397h1v1h-1zM517 398h1v1h-1zM515 399h1v1h-1zM513 400h1v1h-1zM512 400h1v1h-1zM510 401h1v1h-1zM508 402h1v1h-1zM507 403h1v1h-1zM505 403h1v1h-1zM503 404h1v1h-1zM501 405h1v1h-1zM499 405h1v1h-1zM497 406h1v1h-1zM495 406h1v1h-1zM493 407h1v1h-1zM491 407h1v1h-1zM490 407h1v1h-1zM488 407h1v1h-1zM486 408h1v1h-1zM484 408h1v1h-1zM482 408h1v1h-1zM480 408h1v1h-1zM477 408h1v1h-1zM475 408h1v1h-1zM473 408h1v1h-1zM471 407h1v1h-1zM469 407h1v1h-1zM468 407h1v1h-1zM466 407h1v1h-1zM464 406h1v1h-1zM462 406h1v1h-1zM460 405h1v1h-1zM458 405h1v1h-1zM456 404h1v1h-1zM454 403h1v1h-1zM452 403h1v1h-1zM451 402h1v1h-1zM449 401h1v1h-1zM447 400h1v1h-1zM446 400h1v1h-1zM444 399h1v1h-1zM442 398h1v1h-1zM441 397h1v1h-1zM439 396h1v1h-1zM438 395h1v1h-1zM437 393h1v1h-1zM435 392h1v1h-1zM434 391h1v1h-1zM433 390h1v1h-1zM432 389h1v1h-1zM431 387h1v1h-1zM430 386h1v1h-1zM429 385h1v1h-1zM428 383h1v1h-1zM427 382h1v1h-1zM426 381h1v1h-1zM425 379h1v1h-1zM425 378h1v1h-1zM424 376h1v1h-1zM424 375h1v1h-1zM423 374h1v1h-1zM423 372h1v1h-1zM422 371h1v1h-1zM422 369h1v1h-1zM422 368h1v1h-1zM422 366h1v1h-1zM422 365h1v1h-1zM422 363h1v1h-1zM422 361h1v1h-1zM422 360h1v1h-1zM422 358h1v1h-1zM423 357h1v1h-1zM423 355h1v1h-1zM424 354h1v1h-1zM424 353h1v1h-1zM425 351h1v1h-1zM425 350h1v1h-1zM426 348h1v1h-1zM427 347h1v1h-1zM428 346h1v1h-1zM429 344h1v1h-1zM430 343h1v1h-1zM431 342h1v1h-1zM432 340h1v1h-1zM433 339h1v1h-1zM434 338h1v1h-1zM435 337h1v1h-1zM437 336h1v1h-1zM438 334h1v1h-1zM439 333h1v1h-1zM441 332h1v1h-1zM442 331h1v1h-1zM444 330h1v1h-1zM446 329h1v1h-1zM447 329h1v1h-1zM449 328h1v1h-1zM451 327h1v1h-1zM452 326h1v1h-1zM454 326h1v1h-1zM456 325h1v1h-1zM458 324h1v1h-1zM460 324h1v1h-1zM462 323h1v1h-1zM464 323h1v1h-1zM466 322h1v1h-1zM468 322h1v1h-1zM469 322h1v1h-1zM471 322h1v1h-1zM473 321h1v1h-1zM475 321h1v1h-1zM477 321h1v1h-1z" fill="#808080"/>
<path d="M480 121h1v1h-1zM491 121h1v1h-1zM502 121h1v1h-1zM513 122h1v1h-1zM525 123h1v1h-1zM536 124h1v1h-1zM547 126h1v1h-1zM558 128h1v1h-1zM569 130h1v1h-1zM580 132h1v1h-1zM591 135h1v1h-1zM601 138h1v1h-1zM612 142h1v1h-1zM622 145h1v1h-1zM632 149h1v1h-1zM642 153h1v1h-1zM652 158h1v1h-1zM661 162h1v1h-1zM671 167h1v1h-1zM680 172h1v1h-1zM688 178h1v1h-1zM697 183h1v1h-1zM705 189h1v1h-1zM713 195h1v1h-1zM721 201h1v1h-1zM728 208h1v1h-1zM736 214h1v1h-1zM742 221h1v1h-1zM749 228h1v1h-1zM755 235h1v1h-1zM761 243h1v1h-1zM766 250h1v1h-1zM772 258h1v1h-1zM776 265h1v1h-1zM781 273h1v1h-1zM785 281h1v1h-1zM789 289h1v1h-1zM792 297h1v1h-1zM795 305h1v1h-1zM797 314h1v1h-1zM800 322h1v1h-1zM801 331h1v1h-1zM803 339h1v1h-1zM804 347h1v1h-1zM804 356h1v1h-1zM805 365h1v1h-1zM804 373h1v1h-1zM804 382h1v1h-1zM803 390h1v1h-1zM801 398h1v1h-1zM800 407h1v1h-1zM797 415h1v1h-1zM795 424h1v1h-1zM792 432h1v1h-1zM789 440h1v1h-1zM785 448h1v1h-1zM781 456h1v1h-1zM776 464h1v1h-1zM772 471h1v1h-1zM766 479h1v1h-1zM761 487h1v1h-1zM755 494h1v1h-1zM749 501h1v1h-1zM742 508h1v1h-1zM736 515h1v1h-1zM728 521h1v1h-1zM721 528h1v1h-1zM713 534h1v1h-1zM705 540h1v1h-1zM697 546h1v1h-1zM688 551h1v1h-1zM680 557h1v1h-1zM671 562h1v1h-1zM661 567h1v1h-1zM652 571h1v1h-1zM642 576h1v1h-1zM632 580h1v1h-1zM622 584h1v1h-1zM612 587h1v1h-1zM601 591h1v1h-1zM591 594h1v1h-1zM580 597h1v1h-1zM569 599h1v1h-1zM558 601h1v1h-1zM547 603h1v1h-1zM536 605h1v1h-1zM525 606h1v1h-1zM513 607h1v1h-1zM502 608h1v1h-1zM491 608h1v1h-1zM480 609h1v1h-1zM468 608h1v1h-1zM457 608h1v1h-1zM446 607h1v1h-1zM434 606h1v1h-1zM423 605h1v1h-1zM412 603h1v1h-1zM401 601h1v1h-1zM390 599h1v1h-1zM379 597h1v1h-1zM368 594h1v1h-1zM358 591h1v1h-1zM347 587h1v1h-1zM337 584h1v1h-1zM327 580h1v1h-1zM317 576h1v1h-1zM307 571h1v1h-1zM298 567h1v1h-1zM288 562h1v1h-1zM279 557h1v1h-1zM271 551h1v1h-1zM262 546h1v1h-1zM254 540h1v1h-1zM246 534h1v1h-1zM238 528h1v1h-1zM231 521h1v1h-1zM223 515h1v1h-1zM217 508h1v1h-1zM210 501h1v1h-1zM204 494h1v1h-1zM198 487h1v1h-1zM193 479h1v1h-1zM187 471h1v1h-1zM183 464h1v1h-1zM178 456h1v1h-1zM174 448h1v1h-1zM170 440h1v1h-1zM167 432h1v1h-1zM164 424h1v1h-1zM162 415h1v1h-1zM159 407h1v1h-1zM158 398h1v1h-1zM156 390h1v1h-1zM155 382h1v1h-1zM155 373h1v1h-1zM155 365h1v1h-1zM155 356h1v1h-1zM155 347h1v1h-1zM156 339h1v1h-1zM158 331h1v1h-1zM159 322h1v1h-1zM162 314h1v1h-1zM164 305h1v1h-1zM167 297h1v1h-1zM170 289h1v1h-1zM174 281h1v1h-1zM178 273h1v1h-1zM183 265h1v1h-1zM187 258h1v1h-1zM193 250h1v1h-1zM198 243h1v1h-1zM204 235h1v1h-1zM210 228h1v1h-1zM217 221h1v1h-1zM223 214h1v1h-1zM231 208h1v1h-1zM238 201h1v1h-1zM246 195h1v1h-1zM254 189h1v1h-1zM262 183h1v1h-1zM271 178h1v1h-1zM279 172h1v1h-1zM288 167h1v1h-1zM298 162h1v1h-1zM307 158h1v1h-1zM317 153h1v1h-1zM327 149h1v1h-1zM337 145h1v1h-1zM347 142h1v1h-1zM358 138h1v1h-1zM368 135h1v1h-1zM379 132h1v1h-1zM390 130h1v1h-1zM401 128h1v1h-1zM412 126h1v1h-1zM423 124h1v1h-1zM434 123h1v1h-1zM446 122h1v1h-1zM457 121h1v1h-1zM468 121h1v1h-1zM480 228h1v1h-1zM486 228h1v1h-1zM492 228h1v1h-1zM499 228h1v1h-1zM505 229h1v1h-1zM511 230h1v1h-1zM517 231h1v1h-1zM524 232h1v1h-1zM530 233h1v1h-1zM536 234h1v1h-1zM542 236h1v1h-1zM548 238h1v1h-1zM554 240h1v1h-1zM559 242h1v1h-1zM565 244h1v1h-1zM571 246h1v1h-1zM576 248h1v1h-1zM581 251h1v1h-1zM587 254h1v1h-1zM592 257h1v1h-1zM597 260h1v1h-1zM601 263h1v1h-1zM606 266h1v1h-1zM611 269h1v1h-1zM615 273h1v1h-1zM619 277h1v1h-1zM623 280h1v1h-1zM627 284h1v1h-1zM631 288h1v1h-1zM634 292h1v1h-1zM637 296h1v1h-1zM640 300h1v1h-1zM643 305h1v1h-1zM646 309h1v1h-1zM648 313h1v1h-1zM651 318h1v1h-1zM653 322h1v1h-1zM655 327h1v1h-1zM656 331h1v1h-1zM658 336h1v1h-1zM659 341h1v1h-1zM660 345h1v1h-1zM661 350h1v1h-1zM661 355h1v1h-1zM662 360h1v1h-1zM662 365h1v1h-1zM662 369h1v1h-1zM661 374h1v1h-1zM661 379h1v1h-1zM660 384h1v1h-1zM659 388h1v1h-1zM658 393h1v1h-1zM656 398h1v1h-1zM655 402h1v1h-1zM653 407h1v1h-1zM651 411h1v1h-1zM648 416h1v1h-1zM646 420h1v1h-1zM643 424h1v1h-1zM640 429h1v1h-1zM637 433h1v1h-1zM634 437h1v1h-1zM631 441h1v1h-1zM627 445h1v1h-1zM623 449h1v1h-1zM619 452h1v1h-1zM615 456h1v1h-1zM611 460h1v1h-1zM606 463h1v1h-1zM601 466h1v1h-1zM597 469h1v1h-1zM592 472h1v1h-1zM587 475h1v1h-1zM581 478h1v1h-1zM576 481h1v1h-1zM571 483h1v1h-1zM565 485h1v1h-1zM559 487h1v1h-1zM554 489h1v1h-1zM548 491h1v1h-1zM542 493h1v1h-1zM536 495h1v1h-1zM530 496h1v1h-1zM524 497h1v1h-1zM517 498h1v1h-1zM511 499h1v1h-1zM505 500h1v1h-1zM499 501h1v1h-1zM492 501h1v1h-1zM486 501h1v1h-1zM480 501h1v1h-1zM473 501h1v1h-1zM467 501h1v1h-1zM460 501h1v1h-1zM454 500h1v1h-1zM448 499h1v1h-1zM442 498h1v1h-1zM435 497h1v1h-1zM429 496h1v1h-1zM423 495h1v1h-1zM417 493h1v1h-1zM411 491h1v1h-1zM405 489h1v1h-1zM400 487h1v1h-1zM394 485h1v1h-1zM388 483h1v1h-1zM383 481h1v1h-1zM378 478h1v1h-1zM372 475h1v1h-1zM367 472h1v1h-1zM362 469h1v1h-1zM358 466h1v1h-1zM353 463h1v1h-1zM348 460h1v1h-1zM344 456h1v1h-1zM340 452h1v1h-1zM336 449h1v1h-1zM332 445h1v1h-1zM328 441h1v1h-1zM325 437h1v1h-1zM322 433h1v1h-1zM319 429h1v1h-1zM316 424h1v1h-1zM313 420h1v1h-1zM311 416h1v1h-1zM308 411h1v1h-1zM306 407h1v1h-1zM304 402h1v1h-1zM303 398h1v1h-1zM301 393h1v1h-1zM300 388h1v1h-1zM299 384h1v1h-1zM298 379h1v1h-1zM298 374h1v1h-1zM297 369h1v1h-1zM297 365h1v1h-1zM297 360h1v1h-1zM298 355h1v1h-1zM298 350h1v1h-1zM299 345h1v1h-1zM300 341h1v1h-1zM301 336h1v1h-1zM303 331h1v1h-1zM304 327h1v1h-1zM306 322h1v1h-1zM308 318h1v1h-1zM311 313h1v1h-1zM313 309h1v1h-1zM316 305h1v1h-1zM319 300h1v1h-1zM322 296h1v1h-1zM325 292h1v1h-1zM328 288h1v1h-1zM332 284h1v1h-1zM336 280h1v1h-1zM340 277h1v1h-1zM344 273h1v1h-1zM348 269h1v1h-1zM353 266h1v1h-1zM358 263h1v1h-1zM362 260h1v1h-1zM367 257h1v1h-1zM372 254h1v1h-1zM378 251h1v1h-1zM383 248h1v1h-1zM388 246h1v1h-1zM394 244h1v1h-1zM400 242h1v1h-1zM405 240h1v1h-1zM411 238h1v1h-1zM417 236h1v1h-1zM423 234h1v1h-1zM429 233h1v1h-1zM435 232h1v1h-1zM442 231h1v1h-1zM448 230h1v1h-1zM454 229h1v1h-1zM460 228h1v1h-1zM467 228h1v1h-1zM473 228h1v1h-1zM480 287h1v1h-1zM483 287h1v1h-1zM487 288h1v1h-1zM490 288h1v1h-1zM494 288h1v1h-1zM497 288h1v1h-1zM501 289h1v1h-1zM504 290h1v1h-1zM508 290h1v1h-1zM511 291h1v1h-1zM515 292h1v1h-1zM518 293h1v1h-1zM521 294h1v1h-1zM525 295h1v1h-1zM528 296h1v1h-1zM531 298h1v1h-1zM534 299h1v1h-1zM537 301h1v1h-1zM540 302h1v1h-1zM543 304h1v1h-1zM546 305h1v1h-1zM548 307h1v1h-1zM551 309h1v1h-1zM553 311h1v1h-1zM556 313h1v1h-1zM558 315h1v1h-1zM561 317h1v1h-1zM563 319h1v1h-1zM565 321h1v1h-1zM567 324h1v1h-1zM569 326h1v1h-1zM570 328h1v1h-1zM572 331h1v1h-1zM573 333h1v1h-1zM575 336h1v1h-1zM576 338h1v1h-1zM577 341h1v1h-1zM578 343h1v1h-1zM579 346h1v1h-1zM580 348h1v1h-1zM581 351h1v1h-1zM581 354h1v1h-1zM582 356h1v1h-1zM582 359h1v1h-1zM582 362h1v1h-1zM582 365h1v1h-1zM582 367h1v1h-1zM582 370h1v1h-1zM582 373h1v1h-1zM581 375h1v1h-1zM581 378h1v1h-1zM580 381h1v1h-1zM579 383h1v1h-1zM578 386h1v1h-1zM577 388h1v1h-1zM576 391h1v1h-1zM575 393h1v1h-1zM573 396h1v1h-1zM572 398h1v1h-1zM570 401h1v1h-1zM569 403h1v1h-1zM567 405h1v1h-1zM565 408h1v1h-1zM563 410h1v1h-1zM561 412h1v1h-1zM558 414h1v1h-1zM556 416h1v1h-1zM553 418h1v1h-1zM551 420h1v1h-1zM548 422h1v1h-1zM546 424h1v1h-1zM543 425h1v1h-1zM540 427h1v1h-1zM537 428h1v1h-1zM534 430h1v1h-1zM531 431h1v1h-1zM528 433h1v1h-1zM525 434h1v1h-1zM521 435h1v1h-1zM518 436h1v1h-1zM515 437h1v1h-1zM511 438h1v1h-1zM508 439h1v1h-1zM504 439h1v1h-1zM501 440h1v1h-1zM497 441h1v1h-1zM494 441h1v1h-1zM490 441h1v1h-1zM487 441h1v1h-1zM483 442h1v1h-1zM480 442h1v1h-1zM476 442h1v1h-1zM472 441h1v1h-1zM469 441h1v1h-1zM465 441h1v1h-1zM462 441h1v1h-1zM458 440h1v1h-1zM455 439h1v1h-1zM451 439h1v1h-1zM448 438h1v1h-1zM444 437h1v1h-1zM441 436h1v1h-1zM438 435h1v1h-1zM434 434h1v1h-1zM431 433h1v1h-1zM428 431h1v1h-1zM425 430h1v1h-1zM422 428h1v1h-1zM419 427h1v1h-1zM416 425h1v1h-1zM413 424h1v1h-1zM411 422h1v1h-1zM408 420h1v1h-1zM406 418h1v1h-1zM403 416h1v1h-1zM401 414h1v1h-1zM398 412h1v1h-1zM396 410h1v1h-1zM394 408h1v1h-1zM392 405h1v1h-1zM390 403h1v1h-1zM389 401h1v1h-1zM387 398h1v1h-1zM386 396h1v1h-1zM384 393h1v1h-1zM383 391h1v1h-1zM382 388h1v1h-1zM381 386h1v1h-1zM380 383h1v1h-1zM379 381h1v1h-1zM378 378h1v1h-1zM378 375h1v1h-1zM377 373h1v1h-1zM377 370h1v1h-1zM377 367h1v1h-1zM377 365h1v1h-1zM377 362h1v1h-1zM377 359h1v1h-1zM377 356h1v1h-1zM378 354h1v1h-1zM378 351h1v1h-1zM379 348h1v1h-1zM380 346h1v1h-1zM381 343h1v1h-1zM382 341h1v1h-1zM383 338h1v1h-1zM384 336h1v1h-1zM386 333h1v1h-1zM387 331h1v1h-1zM389 328h1v1h-1zM390 326h1v1h-1zM392 324h1v1h-1zM394 321h1v1h-1zM396 319h1v1h-1zM398 317h1v1h-1zM401 315h1v1h-1zM403 313h1v1h-1zM406 311h1v1h-1zM408 309h1v1h-1zM411 307h1v1h-1zM413 305h1v1h-1zM416 304h1v1h-1zM419 302h1v1h-1zM422 301h1v1h-1zM425 299h1v1h-1zM428 298h1v1h-1zM431 296h1v1h-1zM434 295h1v1h-1zM438 294h1v1h-1zM441 293h1v1h-1zM444 292h1v1h-1zM448 291h1v1h-1zM451 290h1v1h-1zM455 290h1v1h-1zM458 289h1v1h-1zM462 288h1v1h-1zM465 288h1v1h-1zM469 288h1v1h-1zM472 288h1v1h-1zM476 287h1v1h-1zM480 319h1v1h-1zM480 317h1v1h-1zM480 315h1v1h-1zM480 313h1v1h-1zM480 310h1v1h-1zM480 308h1v1h-1zM480 305h1v1h-1zM480 303h1v1h-1zM480 300h1v1h-1zM480 297h1v1h-1zM480 294h1v1h-1zM480 291h1v1h-1zM480 283h1v1h-1zM480 278h1v1h-1zM480 273h1v1h-1zM480 267h1v1h-1zM480 262h1v1h-1zM480 256h1v1h-1zM480 249h1v1h-1zM480 243h1v1h-1zM480 235h1v1h-1zM480 220h1v1h-1zM480 211h1v1h-1zM480 202h1v1h-1zM480 192h1v1h-1zM480 182h1v1h-1zM480 171h1v1h-1zM480 160h1v1h-1zM480 147h1v1h-1zM480 134h1v1h-1zM490 320h1v1h-1zM490 318h1v1h-1zM491 316h1v1h-1zM491 314h1v1h-1zM492 311h1v1h-1zM493 309h1v1h-1zM493 306h1v1h-1zM494 304h1v1h-1zM494 301h1v1h-1zM495 298h1v1h-1zM496 295h1v1h-1zM497 292h1v1h-1zM498 284h1v1h-1zM500 279h1v1h-1zM501 274h1v1h-1zM502 269h1v1h-1zM503 263h1v1h-1zM505 257h1v1h-1zM506 251h1v1h-1zM508 244h1v1h-1zM509 237h1v1h-1zM513 222h1v1h-1zM515 213h1v1h-1zM517 204h1v1h-1zM519 195h1v1h-1zM522 185h1v1h-1zM524 174h1v1h-1zM527 163h1v1h-1zM530 151h1v1h-1zM533 138h1v1h-1zM500 322h1v1h-1zM501 320h1v1h-1zM502 318h1v1h-1zM503 316h1v1h-1zM504 314h1v1h-1zM505 311h1v1h-1zM506 309h1v1h-1zM508 306h1v1h-1zM509 304h1v1h-1zM510 301h1v1h-1zM512 298h1v1h-1zM513 295h1v1h-1zM517 288h1v1h-1zM519 283h1v1h-1zM521 278h1v1h-1zM524 273h1v1h-1zM526 268h1v1h-1zM529 262h1v1h-1zM532 256h1v1h-1zM535 250h1v1h-1zM538 243h1v1h-1zM546 228h1v1h-1zM549 220h1v1h-1zM554 212h1v1h-1zM558 203h1v1h-1zM563 193h1v1h-1zM568 183h1v1h-1zM573 172h1v1h-1zM578 160h1v1h-1zM584 148h1v1h-1zM510 325h1v1h-1zM511 323h1v1h-1zM512 322h1v1h-1zM514 320h1v1h-1zM516 318h1v1h-1zM517 316h1v1h-1zM519 313h1v1h-1zM521 311h1v1h-1zM523 309h1v1h-1zM524 306h1v1h-1zM527 303h1v1h-1zM529 301h1v1h-1zM534 294h1v1h-1zM537 290h1v1h-1zM541 285h1v1h-1zM544 280h1v1h-1zM548 276h1v1h-1zM552 270h1v1h-1zM556 265h1v1h-1zM561 259h1v1h-1zM566 253h1v1h-1zM576 239h1v1h-1zM582 232h1v1h-1zM588 224h1v1h-1zM594 215h1v1h-1zM601 206h1v1h-1zM608 197h1v1h-1zM616 187h1v1h-1zM624 176h1v1h-1zM633 165h1v1h-1zM518 330h1v1h-1zM520 328h1v1h-1zM522 327h1v1h-1zM524 325h1v1h-1zM526 323h1v1h-1zM528 321h1v1h-1zM530 319h1v1h-1zM532 317h1v1h-1zM535 315h1v1h-1zM537 313h1v1h-1zM540 310h1v1h-1zM543 308h1v1h-1zM549 302h1v1h-1zM554 298h1v1h-1zM558 294h1v1h-1zM563 290h1v1h-1zM567 286h1v1h-1zM573 281h1v1h-1zM578 276h1v1h-1zM584 271h1v1h-1zM590 266h1v1h-1zM604 253h1v1h-1zM611 247h1v1h-1zM619 240h1v1h-1zM627 232h1v1h-1zM636 225h1v1h-1zM645 216h1v1h-1zM655 207h1v1h-1zM665 198h1v1h-1zM677 188h1v1h-1zM526 335h1v1h-1zM528 334h1v1h-1zM530 333h1v1h-1zM532 331h1v1h-1zM535 330h1v1h-1zM537 328h1v1h-1zM540 326h1v1h-1zM543 325h1v1h-1zM545 323h1v1h-1zM548 321h1v1h-1zM552 319h1v1h-1zM555 317h1v1h-1zM563 312h1v1h-1zM568 309h1v1h-1zM573 306h1v1h-1zM579 302h1v1h-1zM584 298h1v1h-1zM591 295h1v1h-1zM597 290h1v1h-1zM604 286h1v1h-1zM611 281h1v1h-1zM627 271h1v1h-1zM636 266h1v1h-1zM645 260h1v1h-1zM655 254h1v1h-1zM666 247h1v1h-1zM677 240h1v1h-1zM689 233h1v1h-1zM701 225h1v1h-1zM714 217h1v1h-1zM532 342h1v1h-1zM534 341h1v1h-1zM537 340h1v1h-1zM539 339h1v1h-1zM542 337h1v1h-1zM545 336h1v1h-1zM548 335h1v1h-1zM551 334h1v1h-1zM554 332h1v1h-1zM557 331h1v1h-1zM561 329h1v1h-1zM565 328h1v1h-1zM574 324h1v1h-1zM579 321h1v1h-1zM585 319h1v1h-1zM591 316h1v1h-1zM598 313h1v1h-1zM605 310h1v1h-1zM612 307h1v1h-1zM620 304h1v1h-1zM629 300h1v1h-1zM647 292h1v1h-1zM657 288h1v1h-1zM667 283h1v1h-1zM678 278h1v1h-1zM690 273h1v1h-1zM703 268h1v1h-1zM716 262h1v1h-1zM730 256h1v1h-1zM745 249h1v1h-1zM536 349h1v1h-1zM539 348h1v1h-1zM541 348h1v1h-1zM544 347h1v1h-1zM547 346h1v1h-1zM550 345h1v1h-1zM553 344h1v1h-1zM557 343h1v1h-1zM560 342h1v1h-1zM564 341h1v1h-1zM568 340h1v1h-1zM572 339h1v1h-1zM582 337h1v1h-1zM588 335h1v1h-1zM594 333h1v1h-1zM601 331h1v1h-1zM608 329h1v1h-1zM616 327h1v1h-1zM624 325h1v1h-1zM632 323h1v1h-1zM641 320h1v1h-1zM661 315h1v1h-1zM672 312h1v1h-1zM683 309h1v1h-1zM695 306h1v1h-1zM708 302h1v1h-1zM722 298h1v1h-1zM736 294h1v1h-1zM751 290h1v1h-1zM768 286h1v1h-1zM539 357h1v1h-1zM542 356h1v1h-1zM544 356h1v1h-1zM547 356h1v1h-1zM550 355h1v1h-1zM554 355h1v1h-1zM557 354h1v1h-1zM561 354h1v1h-1zM564 353h1v1h-1zM568 353h1v1h-1zM572 352h1v1h-1zM576 352h1v1h-1zM587 350h1v1h-1zM593 349h1v1h-1zM600 349h1v1h-1zM607 348h1v1h-1zM614 347h1v1h-1zM622 346h1v1h-1zM631 344h1v1h-1zM640 343h1v1h-1zM649 342h1v1h-1zM670 339h1v1h-1zM681 338h1v1h-1zM693 336h1v1h-1zM706 335h1v1h-1zM719 333h1v1h-1zM733 331h1v1h-1zM748 329h1v1h-1zM764 327h1v1h-1zM781 325h1v1h-1zM540 365h1v1h-1zM543 365h1v1h-1zM545 365h1v1h-1zM548 365h1v1h-1zM552 365h1v1h-1zM555 365h1v1h-1zM558 365h1v1h-1zM562 365h1v1h-1zM566 365h1v1h-1zM569 365h1v1h-1zM574 365h1v1h-1zM578 365h1v1h-1zM588 365h1v1h-1zM595 365h1v1h-1zM602 365h1v1h-1zM609 365h1v1h-1zM616 365h1v1h-1zM624 365h1v1h-1zM633 365h1v1h-1zM642 365h1v1h-1zM652 365h1v1h-1zM673 365h1v1h-1zM684 365h1v1h-1zM696 365h1v1h-1zM709 365h1v1h-1zM723 365h1v1h-1zM737 365h1v1h-1zM753 365h1v1h-1zM769 365h1v1h-1zM786 365h1v1h-1zM539 372h1v1h-1zM542 373h1v1h-1zM544 373h1v1h-1zM547 373h1v1h-1zM550 374h1v1h-1zM554 374h1v1h-1zM557 375h1v1h-1zM561 375h1v1h-1zM564 376h1v1h-1zM568 376h1v1h-1zM572 377h1v1h-1zM576 377h1v1h-1zM587 379h1v1h-1zM593 380h1v1h-1zM600 380h1v1h-1zM607 381h1v1h-1zM614 382h1v1h-1zM622 383h1v1h-1zM631 385h1v1h-1zM640 386h1v1h-1zM649 387h1v1h-1zM670 390h1v1h-1zM681 391h1v1h-1zM693 393h1v1h-1zM706 394h1v1h-1zM719 396h1v1h-1zM733 398h1v1h-1zM748 400h1v1h-1zM764 402h1v1h-1zM781 404h1v1h-1zM536 380h1v1h-1zM539 381h1v1h-1zM541 381h1v1h-1zM544 382h1v1h-1zM547 383h1v1h-1zM550 384h1v1h-1zM553 385h1v1h-1zM557 386h1v1h-1zM560 387h1v1h-1zM564 388h1v1h-1zM568 389h1v1h-1zM572 390h1v1h-1zM582 392h1v1h-1zM588 394h1v1h-1zM594 396h1v1h-1zM601 398h1v1h-1zM608 400h1v1h-1zM616 402h1v1h-1zM624 404h1v1h-1zM632 406h1v1h-1zM641 409h1v1h-1zM661 414h1v1h-1zM672 417h1v1h-1zM683 420h1v1h-1zM695 423h1v1h-1zM708 427h1v1h-1zM722 431h1v1h-1zM736 435h1v1h-1zM751 439h1v1h-1zM768 443h1v1h-1zM532 387h1v1h-1zM534 388h1v1h-1zM537 389h1v1h-1zM539 390h1v1h-1zM542 392h1v1h-1zM545 393h1v1h-1zM548 394h1v1h-1zM551 395h1v1h-1zM554 397h1v1h-1zM557 398h1v1h-1zM561 400h1v1h-1zM565 401h1v1h-1zM574 405h1v1h-1zM579 408h1v1h-1zM585 410h1v1h-1zM591 413h1v1h-1zM598 416h1v1h-1zM605 419h1v1h-1zM612 422h1v1h-1zM620 425h1v1h-1zM629 429h1v1h-1zM647 437h1v1h-1zM657 441h1v1h-1zM667 446h1v1h-1zM678 451h1v1h-1zM690 456h1v1h-1zM703 461h1v1h-1zM716 467h1v1h-1zM730 473h1v1h-1zM745 480h1v1h-1zM526 394h1v1h-1zM528 395h1v1h-1zM530 396h1v1h-1zM532 398h1v1h-1zM535 399h1v1h-1zM537 401h1v1h-1zM540 403h1v1h-1zM543 404h1v1h-1zM545 406h1v1h-1zM548 408h1v1h-1zM552 410h1v1h-1zM555 412h1v1h-1zM563 417h1v1h-1zM568 420h1v1h-1zM573 423h1v1h-1zM579 427h1v1h-1zM584 431h1v1h-1zM591 434h1v1h-1zM597 439h1v1h-1zM604 443h1v1h-1zM611 448h1v1h-1zM627 458h1v1h-1zM636 463h1v1h-1zM645 469h1v1h-1zM655 475h1v1h-1zM666 482h1v1h-1zM677 489h1v1h-1zM689 496h1v1h-1zM701 504h1v1h-1zM714 512h1v1h-1zM518 399h1v1h-1zM520 401h1v1h-1zM522 402h1v1h-1zM524 404h1v1h-1zM526 406h1v1h-1zM528 408h1v1h-1zM530 410h1v1h-1zM532 412h1v1h-1zM535 414h1v1h-1zM537 416h1v1h-1zM540 419h1v1h-1zM543 421h1v1h-1zM549 427h1v1h-1zM554 431h1v1h-1zM558 435h1v1h-1zM563 439h1v1h-1zM567 443h1v1h-1zM573 448h1v1h-1zM578 453h1v1h-1zM584 458h1v1h-1zM590 463h1v1h-1zM604 476h1v1h-1zM611 482h1v1h-1zM619 489h1v1h-1zM627 497h1v1h-1zM636 504h1v1h-1zM645 513h1v1h-1zM655 522h1v1h-1zM665 531h1v1h-1zM677 541h1v1h-1zM510 404h1v1h-1zM511 406h1v1h-1zM512 407h1v1h-1zM514 409h1v1h-1zM516 411h1v1h-1zM517 413h1v1h-1zM519 416h1v1h-1zM521 418h1v1h-1zM523 420h1v1h-1zM524 423h1v1h-1zM527 426h1v1h-1zM529 428h1v1h-1zM534 435h1v1h-1zM537 439h1v1h-1zM541 444h1v1h-1zM544 449h1v1h-1zM548 453h1v1h-1zM552 459h1v1h-1zM556 464h1v1h-1zM561 470h1v1h-1zM566 476h1v1h-1zM576 490h1v1h-1zM582 497h1v1h-1zM588 505h1v1h-1zM594 514h1v1h-1zM601 523h1v1h-1zM608 532h1v1h-1zM616 542h1v1h-1zM624 553h1v1h-1zM633 564h1v1h-1zM500 407h1v1h-1zM501 409h1v1h-1zM502 411h1v1h-1zM503 413h1v1h-1zM504 415h1v1h-1zM505 418h1v1h-1zM506 420h1v1h-1zM508 423h1v1h-1zM509 425h1v1h-1zM510 428h1v1h-1zM512 431h1v1h-1zM513 434h1v1h-1zM517 441h1v1h-1zM519 446h1v1h-1zM521 451h1v1h-1zM524 456h1v1h-1zM526 461h1v1h-1zM529 467h1v1h-1zM532 473h1v1h-1zM535 479h1v1h-1zM538 486h1v1h-1zM546 501h1v1h-1zM549 509h1v1h-1zM554 517h1v1h-1zM558 526h1v1h-1zM563 536h1v1h-1zM568 546h1v1h-1zM573 557h1v1h-1zM578 569h1v1h-1zM584 581h1v1h-1zM490 409h1v1h-1zM490 411h1v1h-1zM491 413h1v1h-1zM491 415h1v1h-1zM492 418h1v1h-1zM493 420h1v1h-1zM493 423h1v1h-1zM494 425h1v1h-1zM494 428h1v1h-1zM495 431h1v1h-1zM496 434h1v1h-1zM497 437h1v1h-1zM498 445h1v1h-1zM500 450h1v1h-1zM501 455h1v1h-1zM502 460h1v1h-1zM503 466h1v1h-1zM505 472h1v1h-1zM506 478h1v1h-1zM508 485h1v1h-1zM509 492h1v1h-1zM513 507h1v1h-1zM515 516h1v1h-1zM517 525h1v1h-1zM519 534h1v1h-1zM522 544h1v1h-1zM524 555h1v1h-1zM527 566h1v1h-1zM530 578h1v1h-1zM533 591h1v1h-1zM480 410h1v1h-1zM480 412h1v1h-1zM480 414h1v1h-1zM480 416h1v1h-1zM480 419h1v1h-1zM480 421h1v1h-1zM480 424h1v1h-1zM480 426h1v1h-1zM480 429h1v1h-1zM480 432h1v1h-1zM480 435h1v1h-1zM480 438h1v1h-1zM480 446h1v1h-1zM480 451h1v1h-1zM480 456h1v1h-1zM480 462h1v1h-1zM480 467h1v1h-1zM480 473h1v1h-1zM480 480h1v1h-1zM480 486h1v1h-1zM480 494h1v1h-1zM480 509h1v1h-1zM480 518h1v1h-1zM480 527h1v1h-1zM480 537h1v1h-1zM480 547h1v1h-1zM480 558h1v1h-1zM480 569h1v1h-1zM480 582h1v1h-1zM480 595h1v1h-1zM469 409h1v1h-1zM469 411h1v1h-1zM468 413h1v1h-1zM468 415h1v1h-1zM467 418h1v1h-1zM466 420h1v1h-1zM466 423h1v1h-1zM465 425h1v1h-1zM465 428h1v1h-1zM464 431h1v1h-1zM463 434h1v1h-1zM462 437h1v1h-1zM461 445h1v1h-1zM459 450h1v1h-1zM458 455h1v1h-1zM457 460h1v1h-1zM456 466h1v1h-1zM454 472h1v1h-1zM453 478h1v1h-1zM451 485h1v1h-1zM450 492h1v1h-1zM446 507h1v1h-1zM444 516h1v1h-1zM442 525h1v1h-1zM440 534h1v1h-1zM437 544h1v1h-1zM435 555h1v1h-1zM432 566h1v1h-1zM429 578h1v1h-1zM426 591h1v1h-1zM459 407h1v1h-1zM458 409h1v1h-1zM457 411h1v1h-1zM456 413h1v1h-1zM455 415h1v1h-1zM454 418h1v1h-1zM453 420h1v1h-1zM451 423h1v1h-1zM450 425h1v1h-1zM449 428h1v1h-1zM447 431h1v1h-1zM446 434h1v1h-1zM442 441h1v1h-1zM440 446h1v1h-1zM438 451h1v1h-1zM435 456h1v1h-1zM433 461h1v1h-1zM430 467h1v1h-1zM427 473h1v1h-1zM424 479h1v1h-1zM421 486h1v1h-1zM413 501h1v1h-1zM410 509h1v1h-1zM405 517h1v1h-1zM401 526h1v1h-1zM396 536h1v1h-1zM391 546h1v1h-1zM386 557h1v1h-1zM381 569h1v1h-1zM375 581h1v1h-1zM449 404h1v1h-1zM448 406h1v1h-1zM447 407h1v1h-1zM445 409h1v1h-1zM443 411h1v1h-1zM442 413h1v1h-1zM440 416h1v1h-1zM438 418h1v1h-1zM436 420h1v1h-1zM435 423h1v1h-1zM432 426h1v1h-1zM430 428h1v1h-1zM425 435h1v1h-1zM422 439h1v1h-1zM418 444h1v1h-1zM415 449h1v1h-1zM411 453h1v1h-1zM407 459h1v1h-1zM403 464h1v1h-1zM398 470h1v1h-1zM393 476h1v1h-1zM383 490h1v1h-1zM377 497h1v1h-1zM371 505h1v1h-1zM365 514h1v1h-1zM358 523h1v1h-1zM351 532h1v1h-1zM343 542h1v1h-1zM335 553h1v1h-1zM326 564h1v1h-1zM441 399h1v1h-1zM439 401h1v1h-1zM437 402h1v1h-1zM435 404h1v1h-1zM433 406h1v1h-1zM431 408h1v1h-1zM429 410h1v1h-1zM427 412h1v1h-1zM424 414h1v1h-1zM422 416h1v1h-1zM419 419h1v1h-1zM416 421h1v1h-1zM410 427h1v1h-1zM405 431h1v1h-1zM401 435h1v1h-1zM396 439h1v1h-1zM392 443h1v1h-1zM386 448h1v1h-1zM381 453h1v1h-1zM375 458h1v1h-1zM369 463h1v1h-1zM355 476h1v1h-1zM348 482h1v1h-1zM340 489h1v1h-1zM332 497h1v1h-1zM323 504h1v1h-1zM314 513h1v1h-1zM304 522h1v1h-1zM294 531h1v1h-1zM282 541h1v1h-1zM433 394h1v1h-1zM431 395h1v1h-1zM429 396h1v1h-1zM427 398h1v1h-1zM424 399h1v1h-1zM422 401h1v1h-1zM419 403h1v1h-1zM416 404h1v1h-1zM414 406h1v1h-1zM411 408h1v1h-1zM407 410h1v1h-1zM404 412h1v1h-1zM396 417h1v1h-1zM391 420h1v1h-1zM386 423h1v1h-1zM380 427h1v1h-1zM375 431h1v1h-1zM368 434h1v1h-1zM362 439h1v1h-1zM355 443h1v1h-1zM348 448h1v1h-1zM332 458h1v1h-1zM323 463h1v1h-1zM314 469h1v1h-1zM304 475h1v1h-1zM293 482h1v1h-1zM282 489h1v1h-1zM270 496h1v1h-1zM258 504h1v1h-1zM245 512h1v1h-1zM427 387h1v1h-1zM425 388h1v1h-1zM422 389h1v1h-1zM420 390h1v1h-1zM417 392h1v1h-1zM414 393h1v1h-1zM411 394h1v1h-1zM408 395h1v1h-1zM405 397h1v1h-1zM402 398h1v1h-1zM398 400h1v1h-1zM394 401h1v1h-1zM385 405h1v1h-1zM380 408h1v1h-1zM374 410h1v1h-1zM368 413h1v1h-1zM361 416h1v1h-1zM354 419h1v1h-1zM347 422h1v1h-1zM339 425h1v1h-1zM330 429h1v1h-1zM312 437h1v1h-1zM302 441h1v1h-1zM292 446h1v1h-1zM281 451h1v1h-1zM269 456h1v1h-1zM256 461h1v1h-1zM243 467h1v1h-1zM229 473h1v1h-1zM214 480h1v1h-1zM423 380h1v1h-1zM420 381h1v1h-1zM418 381h1v1h-1zM415 382h1v1h-1zM412 383h1v1h-1zM409 384h1v1h-1zM406 385h1v1h-1zM402 386h1v1h-1zM399 387h1v1h-1zM395 388h1v1h-1zM391 389h1v1h-1zM387 390h1v1h-1zM377 392h1v1h-1zM371 394h1v1h-1zM365 396h1v1h-1zM358 398h1v1h-1zM351 400h1v1h-1zM343 402h1v1h-1zM335 404h1v1h-1zM327 406h1v1h-1zM318 409h1v1h-1zM298 414h1v1h-1zM287 417h1v1h-1zM276 420h1v1h-1zM264 423h1v1h-1zM251 427h1v1h-1zM237 431h1v1h-1zM223 435h1v1h-1zM208 439h1v1h-1zM191 443h1v1h-1zM420 372h1v1h-1zM417 373h1v1h-1zM415 373h1v1h-1zM412 373h1v1h-1zM409 374h1v1h-1zM405 374h1v1h-1zM402 375h1v1h-1zM398 375h1v1h-1zM395 376h1v1h-1zM391 376h1v1h-1zM387 377h1v1h-1zM383 377h1v1h-1zM372 379h1v1h-1zM366 380h1v1h-1zM359 380h1v1h-1zM352 381h1v1h-1zM345 382h1v1h-1zM337 383h1v1h-1zM328 385h1v1h-1zM319 386h1v1h-1zM310 387h1v1h-1zM289 390h1v1h-1zM278 391h1v1h-1zM266 393h1v1h-1zM253 394h1v1h-1zM240 396h1v1h-1zM226 398h1v1h-1zM211 400h1v1h-1zM195 402h1v1h-1zM178 404h1v1h-1zM419 365h1v1h-1zM416 365h1v1h-1zM414 365h1v1h-1zM411 365h1v1h-1zM407 365h1v1h-1zM404 365h1v1h-1zM401 365h1v1h-1zM397 365h1v1h-1zM393 365h1v1h-1zM390 365h1v1h-1zM385 365h1v1h-1zM381 365h1v1h-1zM371 365h1v1h-1zM364 365h1v1h-1zM357 365h1v1h-1zM350 365h1v1h-1zM343 365h1v1h-1zM335 365h1v1h-1zM326 365h1v1h-1zM317 365h1v1h-1zM307 365h1v1h-1zM286 365h1v1h-1zM275 365h1v1h-1zM263 365h1v1h-1zM250 365h1v1h-1zM236 365h1v1h-1zM222 365h1v1h-1zM207 365h1v1h-1zM190 365h1v1h-1zM173 365h1v1h-1zM420 357h1v1h-1zM417 356h1v1h-1zM415 356h1v1h-1zM412 356h1v1h-1zM409 355h1v1h-1zM405 355h1v1h-1zM402 354h1v1h-1zM398 354h1v1h-1zM395 353h1v1h-1zM391 353h1v1h-1zM387 352h1v1h-1zM383 352h1v1h-1zM372 350h1v1h-1zM366 349h1v1h-1zM359 349h1v1h-1zM352 348h1v1h-1zM345 347h1v1h-1zM337 346h1v1h-1zM328 344h1v1h-1zM319 343h1v1h-1zM310 342h1v1h-1zM289 339h1v1h-1zM278 338h1v1h-1zM266 336h1v1h-1zM253 335h1v1h-1zM240 333h1v1h-1zM226 331h1v1h-1zM211 329h1v1h-1zM195 327h1v1h-1zM178 325h1v1h-1zM423 349h1v1h-1zM420 348h1v1h-1zM418 348h1v1h-1zM415 347h1v1h-1zM412 346h1v1h-1zM409 345h1v1h-1zM406 344h1v1h-1zM402 343h1v1h-1zM399 342h1v1h-1zM395 341h1v1h-1zM391 340h1v1h-1zM387 339h1v1h-1zM377 337h1v1h-1zM371 335h1v1h-1zM365 333h1v1h-1zM358 331h1v1h-1zM351 329h1v1h-1zM343 327h1v1h-1zM335 325h1v1h-1zM327 323h1v1h-1zM318 320h1v1h-1zM298 315h1v1h-1zM287 312h1v1h-1zM276 309h1v1h-1zM264 306h1v1h-1zM251 302h1v1h-1zM237 298h1v1h-1zM223 294h1v1h-1zM208 290h1v1h-1zM191 286h1v1h-1zM427 342h1v1h-1zM425 341h1v1h-1zM422 340h1v1h-1zM420 339h1v1h-1zM417 337h1v1h-1zM414 336h1v1h-1zM411 335h1v1h-1zM408 334h1v1h-1zM405 332h1v1h-1zM402 331h1v1h-1zM398 329h1v1h-1zM394 328h1v1h-1zM385 324h1v1h-1zM380 321h1v1h-1zM374 319h1v1h-1zM368 316h1v1h-1zM361 313h1v1h-1zM354 310h1v1h-1zM347 307h1v1h-1zM339 304h1v1h-1zM330 300h1v1h-1zM312 292h1v1h-1zM302 288h1v1h-1zM292 283h1v1h-1zM281 278h1v1h-1zM269 273h1v1h-1zM256 268h1v1h-1zM243 262h1v1h-1zM229 256h1v1h-1zM214 249h1v1h-1zM433 335h1v1h-1zM431 334h1v1h-1zM429 333h1v1h-1zM427 331h1v1h-1zM424 330h1v1h-1zM422 328h1v1h-1zM419 326h1v1h-1zM416 325h1v1h-1zM414 323h1v1h-1zM411 321h1v1h-1zM407 319h1v1h-1zM404 317h1v1h-1zM396 312h1v1h-1zM391 309h1v1h-1zM386 306h1v1h-1zM380 302h1v1h-1zM375 298h1v1h-1zM368 295h1v1h-1zM362 290h1v1h-1zM355 286h1v1h-1zM348 281h1v1h-1zM332 271h1v1h-1zM323 266h1v1h-1zM314 260h1v1h-1zM304 254h1v1h-1zM293 247h1v1h-1zM282 240h1v1h-1zM270 233h1v1h-1zM258 225h1v1h-1zM245 217h1v1h-1zM441 330h1v1h-1zM439 328h1v1h-1zM437 327h1v1h-1zM435 325h1v1h-1zM433 323h1v1h-1zM431 321h1v1h-1zM429 319h1v1h-1zM427 317h1v1h-1zM424 315h1v1h-1zM422 313h1v1h-1zM419 310h1v1h-1zM416 308h1v1h-1zM410 302h1v1h-1zM405 298h1v1h-1zM401 294h1v1h-1zM396 290h1v1h-1zM392 286h1v1h-1zM386 281h1v1h-1zM381 276h1v1h-1zM375 271h1v1h-1zM369 266h1v1h-1zM355 253h1v1h-1zM348 247h1v1h-1zM340 240h1v1h-1zM332 232h1v1h-1zM323 225h1v1h-1zM314 216h1v1h-1zM304 207h1v1h-1zM294 198h1v1h-1zM282 188h1v1h-1zM449 325h1v1h-1zM448 323h1v1h-1zM447 322h1v1h-1zM445 320h1v1h-1zM443 318h1v1h-1zM442 316h1v1h-1zM440 313h1v1h-1zM438 311h1v1h-1zM436 309h1v1h-1zM435 306h1v1h-1zM432 303h1v1h-1zM430 301h1v1h-1zM425 294h1v1h-1zM422 290h1v1h-1zM418 285h1v1h-1zM415 280h1v1h-1zM411 276h1v1h-1zM407 270h1v1h-1zM403 265h1v1h-1zM398 259h1v1h-1zM393 253h1v1h-1zM383 239h1v1h-1zM377 232h1v1h-1zM371 224h1v1h-1zM365 215h1v1h-1zM358 206h1v1h-1zM351 197h1v1h-1zM343 187h1v1h-1zM335 176h1v1h-1zM326 165h1v1h-1zM459 322h1v1h-1zM458 320h1v1h-1zM457 318h1v1h-1zM456 316h1v1h-1zM455 314h1v1h-1zM454 311h1v1h-1zM453 309h1v1h-1zM451 306h1v1h-1zM450 304h1v1h-1zM449 301h1v1h-1zM447 298h1v1h-1zM446 295h1v1h-1zM442 288h1v1h-1zM440 283h1v1h-1zM438 278h1v1h-1zM435 273h1v1h-1zM433 268h1v1h-1zM430 262h1v1h-1zM427 256h1v1h-1zM424 250h1v1h-1zM421 243h1v1h-1zM413 228h1v1h-1zM410 220h1v1h-1zM405 212h1v1h-1zM401 203h1v1h-1zM396 193h1v1h-1zM391 183h1v1h-1zM386 172h1v1h-1zM381 160h1v1h-1zM375 148h1v1h-1zM469 320h1v1h-1zM469 318h1v1h-1zM468 316h1v1h-1zM468 314h1v1h-1zM467 311h1v1h-1zM466 309h1v1h-1zM466 306h1v1h-1zM465 304h1v1h-1zM465 301h1v1h-1zM464 298h1v1h-1zM463 295h1v1h-1zM462 292h1v1h-1zM461 284h1v1h-1zM459 279h1v1h-1zM458 274h1v1h-1zM457 269h1v1h-1zM456 263h1v1h-1zM454 257h1v1h-1zM453 251h1v1h-1zM451 244h1v1h-1zM450 237h1v1h-1zM446 222h1v1h-1zM444 213h1v1h-1zM442 204h1v1h-1zM440 195h1v1h-1zM437 185h1v1h-1zM435 174h1v1h-1zM432 163h1v1h-1zM429 151h1v1h-1zM426 138h1v1h-1z" fill="#000"/>
<ellipse cx="480.5" cy="365.5" rx="33.0" ry="24.8" fill="none" stroke="#808080" stroke-width="1"/>
<ellipse cx="480.5" cy="365.5" rx="18.7" ry="14.0" fill="none" stroke="#808080" stroke-width="1"/>
<path d="M1167 365h1v1h-1zM1167 357h1v1h-1zM1167 350h1v1h-1zM1168 343h1v1h-1zM1169 336h1v1h-1zM1171 329h1v1h-1zM1172 322h1v1h-1zM1175 315h1v1h-1zM1177 308h1v1h-1zM1180 301h1v1h-1zM1183 294h1v1h-1zM1186 288h1v1h-1zM1190 281h1v1h-1zM1194 275h1v1h-1zM1198 268h1v1h-1zM1203 262h1v1h-1zM1208 256h1v1h-1zM1213 250h1v1h-1zM1219 244h1v1h-1zM1224 238h1v1h-1zM1230 233h1v1h-1zM1237 227h1v1h-1zM1243 222h1v1h-1zM1250 217h1v1h-1zM1257 212h1v1h-1zM1264 207h1v1h-1zM1271 203h1v1h-1zM1279 199h1v1h-1zM1287 195h1v1h-1zM1295 191h1v1h-1zM1303 187h1v1h-1zM1311 184h1v1h-1zM1320 180h1v1h-1zM1328 177h1v1h-1zM1337 174h1v1h-1zM1346 172h1v1h-1zM1355 170h1v1h-1zM1364 167h1v1h-1zM1373 166h1v1h-1zM1383 164h1v1h-1zM1392 163h1v1h-1zM1402 162h1v1h-1zM1411 161h1v1h-1zM1420 160h1v1h-1zM1430 160h1v1h-1zM1440 160h1v1h-1zM1449 160h1v1h-1zM1459 160h1v1h-1zM1468 161h1v1h-1zM1477 162h1v1h-1zM1487 163h1v1h-1zM1496 164h1v1h-1zM1506 166h1v1h-1zM1515 167h1v1h-1zM1524 170h1v1h-1zM1533 172h1v1h-1zM1542 174h1v1h-1zM1551 177h1v1h-1zM1559 180h1v1h-1zM1568 184h1v1h-1zM1576 187h1v1h-1zM1584 191h1v1h-1zM1592 195h1v1h-1zM1600 199h1v1h-1zM1608 203h1v1h-1zM1615 207h1v1h-1zM1622 212h1v1h-1zM1629 217h1v1h-1zM1636 222h1v1h-1zM1642 227h1v1h-1zM1649 233h1v1h-1zM1655 238h1v1h-1zM1660 244h1v1h-1zM1666 250h1v1h-1zM1671 256h1v1h-1zM1676 262h1v1h-1zM1681 268h1v1h-1zM1685 275h1v1h-1zM1689 281h1v1h-1zM1693 288h1v1h-1zM1696 294h1v1h-1zM1699 301h1v1h-1zM1702 308h1v1h-1zM1704 315h1v1h-1zM1707 322h1v1h-1zM1708 329h1v1h-1zM1710 336h1v1h-1zM1711 343h1v1h-1zM1712 350h1v1h-1zM1712 357h1v1h-1zM1713 365h1v1h-1z" fill="#f00"/>
<path d="M1115 365h1v1h-1zM1115 356h1v1h-1zM1115 347h1v1h-1zM1116 339h1v1h-1zM1118 331h1v1h-1zM1119 322h1v1h-1zM1122 314h1v1h-1zM1124 305h1v1h-1zM1127 297h1v1h-1zM1130 289h1v1h-1zM1134 281h1v1h-1zM1138 273h1v1h-1zM1143 265h1v1h-1zM1147 258h1v1h-1zM1153 250h1v1h-1zM1158 243h1v1h-1zM1164 235h1v1h-1zM1170 228h1v1h-1zM1177 221h1v1h-1zM1183 214h1v1h-1zM1191 208h1v1h-1zM1198 201h1v1h-1zM1206 195h1v1h-1zM1214 189h1v1h-1zM1222 183h1v1h-1zM1231 178h1v1h-1zM1239 172h1v1h-1zM1248 167h1v1h-1zM1258 162h1v1h-1zM1267 158h1v1h-1zM1277 153h1v1h-1zM1287 149h1v1h-1zM1297 145h1v1h-1zM1307 142h1v1h-1zM1318 138h1v1h-1zM1328 135h1v1h-1zM1339 132h1v1h-1zM1350 130h1v1h-1zM1361 128h1v1h-1zM1372 126h1v1h-1zM1383 124h1v1h-1zM1394 123h1v1h-1zM1406 122h1v1h-1zM1417 121h1v1h-1zM1428 121h1v1h-1zM1440 121h1v1h-1zM1451 121h1v1h-1zM1462 121h1v1h-1zM1473 122h1v1h-1zM1485 123h1v1h-1zM1496 124h1v1h-1zM1507 126h1v1h-1zM1518 128h1v1h-1zM1529 130h1v1h-1zM1540 132h1v1h-1zM1551 135h1v1h-1zM1561 138h1v1h-1zM1572 142h1v1h-1zM1582 145h1v1h-1zM1592 149h1v1h-1zM1602 153h1v1h-1zM1612 158h1v1h-1zM1621 162h1v1h-1zM1631 167h1v1h-1zM1640 172h1v1h-1zM1648 178h1v1h-1zM1657 183h1v1h-1zM1665 189h1v1h-1zM1673 195h1v1h-1zM1681 201h1v1h-1zM1688 208h1v1h-1zM1696 214h1v1h-1zM1702 221h1v1h-1zM1709 228h1v1h-1zM1715 235h1v1h-1zM1721 243h1v1h-1zM1726 250h1v1h-1zM1732 258h1v1h-1zM1736 265h1v1h-1zM1741 273h1v1h-1zM1745 281h1v1h-1zM1749 289h1v1h-1zM1752 297h1v1h-1zM1755 305h1v1h-1zM1757 314h1v1h-1zM1760 322h1v1h-1zM1761 331h1v1h-1zM1763 339h1v1h-1zM1764 347h1v1h-1zM1764 356h1v1h-1zM1765 365h1v1h-1zM1257 365h1v1h-1zM1257 360h1v1h-1zM1258 355h1v1h-1zM1258 350h1v1h-1zM1259 345h1v1h-1zM1260 341h1v1h-1zM1261 336h1v1h-1zM1263 331h1v1h-1zM1264 327h1v1h-1zM1266 322h1v1h-1zM1268 318h1v1h-1zM1271 313h1v1h-1zM1273 309h1v1h-1zM1276 305h1v1h-1zM1279 300h1v1h-1zM1282 296h1v1h-1zM1285 292h1v1h-1zM1288 288h1v1h-1zM1292 284h1v1h-1zM1296 280h1v1h-1zM1300 277h1v1h-1zM1304 273h1v1h-1zM1308 269h1v1h-1zM1313 266h1v1h-1zM1318 263h1v1h-1zM1322 260h1v1h-1zM1327 257h1v1h-1zM1332 254h1v1h-1zM1338 251h1v1h-1zM1343 248h1v1h-1zM1348 246h1v1h-1zM1354 244h1v1h-1zM1360 242h1v1h-1zM1365 240h1v1h-1zM1371 238h1v1h-1zM1377 236h1v1h-1zM1383 234h1v1h-1zM1389 233h1v1h-1zM1395 232h1v1h-1zM1402 231h1v1h-1zM1408 230h1v1h-1zM1414 229h1v1h-1zM1420 228h1v1h-1zM1427 228h1v1h-1zM1433 228h1v1h-1zM1440 228h1v1h-1zM1446 228h1v1h-1zM1452 228h1v1h-1zM1459 228h1v1h-1zM1465 229h1v1h-1zM1471 230h1v1h-1zM1477 231h1v1h-1zM1484 232h1v1h-1zM1490 233h1v1h-1zM1496 234h1v1h-1zM1502 236h1v1h-1zM1508 238h1v1h-1zM1514 240h1v1h-1zM1519 242h1v1h-1zM1525 244h1v1h-1zM1531 246h1v1h-1zM1536 248h1v1h-1zM1541 251h1v1h-1zM1547 254h1v1h-1zM1552 257h1v1h-1zM1557 260h1v1h-1zM1561 263h1v1h-1zM1566 266h1v1h-1zM1571 269h1v1h-1zM1575 273h1v1h-1zM1579 277h1v1h-1zM1583 280h1v1h-1zM1587 284h1v1h-1zM1591 288h1v1h-1zM1594 292h1v1h-1zM1597 296h1v1h-1zM1600 300h1v1h-1zM1603 305h1v1h-1zM1606 309h1v1h-1zM1608 313h1v1h-1zM1611 318h1v1h-1zM1613 322h1v1h-1zM1615 327h1v1h-1zM1616 331h1v1h-1zM1618 336h1v1h-1zM1619 341h1v1h-1zM1620 345h1v1h-1zM1621 350h1v1h-1zM1621 355h1v1h-1zM1622 360h1v1h-1zM1622 365h1v1h-1zM1337 365h1v1h-1zM1337 362h1v1h-1zM1337 359h1v1h-1zM1337 356h1v1h-1zM1338 354h1v1h-1zM1338 351h1v1h-1zM1339 348h1v1h-1zM1340 346h1v1h-1zM1341 343h1v1h-1zM1342 341h1v1h-1zM1343 338h1v1h-1zM1344 336h1v1h-1zM1346 333h1v1h-1zM1347 331h1v1h-1zM1349 328h1v1h-1zM1350 326h1v1h-1zM1352 324h1v1h-1zM1354 321h1v1h-1zM1356 319h1v1h-1zM1358 317h1v1h-1zM1361 315h1v1h-1zM1363 313h1v1h-1zM1366 311h1v1h-1zM1368 309h1v1h-1zM1371 307h1v1h-1zM1373 305h1v1h-1zM1376 304h1v1h-1zM1379 302h1v1h-1zM1382 301h1v1h-1zM1385 299h1v1h-1zM1388 298h1v1h-1zM1391 296h1v1h-1zM1394 295h1v1h-1zM1398 294h1v1h-1zM1401 293h1v1h-1zM1404 292h1v1h-1zM1408 291h1v1h-1zM1411 290h1v1h-1zM1415 290h1v1h-1zM1418 289h1v1h-1zM1422 288h1v1h-1zM1425 288h1v1h-1zM1429 288h1v1h-1zM1432 288h1v1h-1zM1436 287h1v1h-1zM1440 287h1v1h-1zM1443 287h1v1h-1zM1447 288h1v1h-1zM1450 288h1v1h-1zM1454 288h1v1h-1zM1457 288h1v1h-1zM1461 289h1v1h-1zM1464 290h1v1h-1zM1468 290h1v1h-1zM1471 291h1v1h-1zM1475 292h1v1h-1zM1478 293h1v1h-1zM1481 294h1v1h-1zM1485 295h1v1h-1zM1488 296h1v1h-1zM1491 298h1v1h-1zM1494 299h1v1h-1zM1497 301h1v1h-1zM1500 302h1v1h-1zM1503 304h1v1h-1zM1506 305h1v1h-1zM1508 307h1v1h-1zM1511 309h1v1h-1zM1513 311h1v1h-1zM1516 313h1v1h-1zM1518 315h1v1h-1zM1521 317h1v1h-1zM1523 319h1v1h-1zM1525 321h1v1h-1zM1527 324h1v1h-1zM1529 326h1v1h-1zM1530 328h1v1h-1zM1532 331h1v1h-1zM1533 333h1v1h-1zM1535 336h1v1h-1zM1536 338h1v1h-1zM1537 341h1v1h-1zM1538 343h1v1h-1zM1539 346h1v1h-1zM1540 348h1v1h-1zM1541 351h1v1h-1zM1541 354h1v1h-1zM1542 356h1v1h-1zM1542 359h1v1h-1zM1542 362h1v1h-1zM1542 365h1v1h-1zM1382 365h1v1h-1zM1382 363h1v1h-1zM1382 361h1v1h-1zM1382 360h1v1h-1zM1382 358h1v1h-1zM1383 357h1v1h-1zM1383 355h1v1h-1zM1384 354h1v1h-1zM1384 353h1v1h-1zM1385 351h1v1h-1zM1385 350h1v1h-1zM1386 348h1v1h-1zM1387 347h1v1h-1zM1388 346h1v1h-1zM1389 344h1v1h-1zM1390 343h1v1h-1zM1391 342h1v1h-1zM1392 340h1v1h-1zM1393 339h1v1h-1zM1394 338h1v1h-1zM1395 337h1v1h-1zM1397 336h1v1h-1zM1398 334h1v1h-1zM1399 333h1v1h-1zM1401 332h1v1h-1zM1402 331h1v1h-1zM1404 330h1v1h-1zM1406 329h1v1h-1zM1407 329h1v1h-1zM1409 328h1v1h-1zM1411 327h1v1h-1zM1412 326h1v1h-1zM1414 326h1v1h-1zM1416 325h1v1h-1zM1418 324h1v1h-1zM1420 324h1v1h-1zM1422 323h1v1h-1zM1424 323h1v1h-1zM1426 322h1v1h-1zM1428 322h1v1h-1zM1429 322h1v1h-1zM1431 322h1v1h-1zM1433 321h1v1h-1zM1435 321h1v1h-1zM1437 321h1v1h-1zM1440 321h1v1h-1zM1442 321h1v1h-1zM1444 321h1v1h-1zM1446 321h1v1h-1zM1448 322h1v1h-1zM1450 322h1v1h-1zM1451 322h1v1h-1zM1453 322h1v1h-1zM1455 323h1v1h-1zM1457 323h1v1h-1zM1459 324h1v1h-1zM1461 324h1v1h-1zM1463 325h1v1h-1zM1465 326h1v1h-1zM1467 326h1v1h-1zM1468 327h1v1h-1zM1470 328h1v1h-1zM1472 329h1v1h-1zM1473 329h1v1h-1zM1475 330h1v1h-1zM1477 331h1v1h-1zM1478 332h1v1h-1zM1480 333h1v1h-1zM1481 334h1v1h-1zM1482 336h1v1h-1zM1484 337h1v1h-1zM1485 338h1v1h-1zM1486 339h1v1h-1zM1487 340h1v1h-1zM1488 342h1v1h-1zM1489 343h1v1h-1zM1490 344h1v1h-1zM1491 346h1v1h-1zM1492 347h1v1h-1zM1493 348h1v1h-1zM1494 350h1v1h-1zM1494 351h1v1h-1zM1495 353h1v1h-1zM1495 354h1v1h-1zM1496 355h1v1h-1zM1496 357h1v1h-1zM1497 358h1v1h-1zM1497 360h1v1h-1zM1497 361h1v1h-1zM1497 363h1v1h-1zM1497 365h1v1h-1zM1379 365h1v1h-1zM1376 365h1v1h-1zM1374 365h1v1h-1zM1371 365h1v1h-1zM1367 365h1v1h-1zM1364 365h1v1h-1zM1361 365h1v1h-1zM1357 365h1v1h-1zM1353 365h1v1h-1zM1350 365h1v1h-1zM1345 365h1v1h-1zM1341 365h1v1h-1zM1331 365h1v1h-1zM1324 365h1v1h-1zM1317 365h1v1h-1zM1310 365h1v1h-1zM1303 365h1v1h-1zM1295 365h1v1h-1zM1286 365h1v1h-1zM1277 365h1v1h-1zM1267 365h1v1h-1zM1246 365h1v1h-1zM1235 365h1v1h-1zM1223 365h1v1h-1zM1210 365h1v1h-1zM1196 365h1v1h-1zM1182 365h1v1h-1zM1167 365h1v1h-1zM1150 365h1v1h-1zM1133 365h1v1h-1zM1380 357h1v1h-1zM1377 356h1v1h-1zM1375 356h1v1h-1zM1372 356h1v1h-1zM1369 355h1v1h-1zM1365 355h1v1h-1zM1362 354h1v1h-1zM1358 354h1v1h-1zM1355 353h1v1h-1zM1351 353h1v1h-1zM1347 352h1v1h-1zM1343 352h1v1h-1zM1332 350h1v1h-1zM1326 349h1v1h-1zM1319 349h1v1h-1zM1312 348h1v1h-1zM1305 347h1v1h-1zM1297 346h1v1h-1zM1288 344h1v1h-1zM1279 343h1v1h-1zM1270 342h1v1h-1zM1249 339h1v1h-1zM1238 338h1v1h-1zM1226 336h1v1h-1zM1213 335h1v1h-1zM1200 333h1v1h-1zM1186 331h1v1h-1zM1171 329h1v1h-1zM1155 327h1v1h-1zM1138 325h1v1h-1zM1383 349h1v1h-1zM1380 348h1v1h-1zM1378 348h1v1h-1zM1375 347h1v1h-1zM1372 346h1v1h-1zM1369 345h1v1h-1zM1366 344h1v1h-1zM1362 343h1v1h-1zM1359 342h1v1h-1zM1355 341h1v1h-1zM1351 340h1v1h-1zM1347 339h1v1h-1zM1337 337h1v1h-1zM1331 335h1v1h-1zM1325 333h1v1h-1zM1318 331h1v1h-1zM1311 329h1v1h-1zM1303 327h1v1h-1zM1295 325h1v1h-1zM1287 323h1v1h-1zM1278 320h1v1h-1zM1258 315h1v1h-1zM1247 312h1v1h-1zM1236 309h1v1h-1zM1224 306h1v1h-1zM1211 302h1v1h-1zM1197 298h1v1h-1zM1183 294h1v1h-1zM1168 290h1v1h-1zM1151 286h1v1h-1zM1387 342h1v1h-1zM1385 341h1v1h-1zM1382 340h1v1h-1zM1380 339h1v1h-1zM1377 337h1v1h-1zM1374 336h1v1h-1zM1371 335h1v1h-1zM1368 334h1v1h-1zM1365 332h1v1h-1zM1362 331h1v1h-1zM1358 329h1v1h-1zM1354 328h1v1h-1zM1345 324h1v1h-1zM1340 321h1v1h-1zM1334 319h1v1h-1zM1328 316h1v1h-1zM1321 313h1v1h-1zM1314 310h1v1h-1zM1307 307h1v1h-1zM1299 304h1v1h-1zM1290 300h1v1h-1zM1272 292h1v1h-1zM1262 288h1v1h-1zM1252 283h1v1h-1zM1241 278h1v1h-1zM1229 273h1v1h-1zM1216 268h1v1h-1zM1203 262h1v1h-1zM1189 256h1v1h-1zM1174 249h1v1h-1zM1393 335h1v1h-1zM1391 334h1v1h-1zM1389 333h1v1h-1zM1387 331h1v1h-1zM1384 330h1v1h-1zM1382 328h1v1h-1zM1379 326h1v1h-1zM1376 325h1v1h-1zM1374 323h1v1h-1zM1371 321h1v1h-1zM1367 319h1v1h-1zM1364 317h1v1h-1zM1356 312h1v1h-1zM1351 309h1v1h-1zM1346 306h1v1h-1zM1340 302h1v1h-1zM1335 298h1v1h-1zM1328 295h1v1h-1zM1322 290h1v1h-1zM1315 286h1v1h-1zM1308 281h1v1h-1zM1292 271h1v1h-1zM1283 266h1v1h-1zM1274 260h1v1h-1zM1264 254h1v1h-1zM1253 247h1v1h-1zM1242 240h1v1h-1zM1230 233h1v1h-1zM1218 225h1v1h-1zM1205 217h1v1h-1zM1401 330h1v1h-1zM1399 328h1v1h-1zM1397 327h1v1h-1zM1395 325h1v1h-1zM1393 323h1v1h-1zM1391 321h1v1h-1zM1389 319h1v1h-1zM1387 317h1v1h-1zM1384 315h1v1h-1zM1382 313h1v1h-1zM1379 310h1v1h-1zM1376 308h1v1h-1zM1370 302h1v1h-1zM1365 298h1v1h-1zM1361 294h1v1h-1zM1356 290h1v1h-1zM1352 286h1v1h-1zM1346 281h1v1h-1zM1341 276h1v1h-1zM1335 271h1v1h-1zM1329 266h1v1h-1zM1315 253h1v1h-1zM1308 247h1v1h-1zM1300 240h1v1h-1zM1292 232h1v1h-1zM1283 225h1v1h-1zM1274 216h1v1h-1zM1264 207h1v1h-1zM1254 198h1v1h-1zM1242 188h1v1h-1zM1409 325h1v1h-1zM1408 323h1v1h-1zM1407 322h1v1h-1zM1405 320h1v1h-1zM1403 318h1v1h-1zM1402 316h1v1h-1zM1400 313h1v1h-1zM1398 311h1v1h-1zM1396 309h1v1h-1zM1395 306h1v1h-1zM1392 303h1v1h-1zM1390 301h1v1h-1zM1385 294h1v1h-1zM1382 290h1v1h-1zM1378 285h1v1h-1zM1375 280h1v1h-1zM1371 276h1v1h-1zM1367 270h1v1h-1zM1363 265h1v1h-1zM1358 259h1v1h-1zM1353 253h1v1h-1zM1343 239h1v1h-1zM1337 232h1v1h-1zM1331 224h1v1h-1zM1325 215h1v1h-1zM1318 206h1v1h-1zM1311 197h1v1h-1zM1303 187h1v1h-1zM1295 176h1v1h-1zM1286 165h1v1h-1zM1419 322h1v1h-1zM1418 320h1v1h-1zM1417 318h1v1h-1zM1416 316h1v1h-1zM1415 314h1v1h-1zM1414 311h1v1h-1zM1413 309h1v1h-1zM1411 306h1v1h-1zM1410 304h1v1h-1zM1409 301h1v1h-1zM1407 298h1v1h-1zM1406 295h1v1h-1zM1402 288h1v1h-1zM1400 283h1v1h-1zM1398 278h1v1h-1zM1395 273h1v1h-1zM1393 268h1v1h-1zM1390 262h1v1h-1zM1387 256h1v1h-1zM1384 250h1v1h-1zM1381 243h1v1h-1zM1373 228h1v1h-1zM1370 220h1v1h-1zM1365 212h1v1h-1zM1361 203h1v1h-1zM1356 193h1v1h-1zM1351 183h1v1h-1zM1346 172h1v1h-1zM1341 160h1v1h-1zM1335 148h1v1h-1zM1429 320h1v1h-1zM1429 318h1v1h-1zM1428 316h1v1h-1zM1428 314h1v1h-1zM1427 311h1v1h-1zM1426 309h1v1h-1zM1426 306h1v1h-1zM1425 304h1v1h-1zM1425 301h1v1h-1zM1424 298h1v1h-1zM1423 295h1v1h-1zM1422 292h1v1h-1zM1421 284h1v1h-1zM1419 279h1v1h-1zM1418 274h1v1h-1zM1417 269h1v1h-1zM1416 263h1v1h-1zM1414 257h1v1h-1zM1413 251h1v1h-1zM1411 244h1v1h-1zM1410 237h1v1h-1zM1406 222h1v1h-1zM1404 213h1v1h-1zM1402 204h1v1h-1zM1400 195h1v1h-1zM1397 185h1v1h-1zM1395 174h1v1h-1zM1392 163h1v1h-1zM1389 151h1v1h-1zM1386 138h1v1h-1zM1440 319h1v1h-1zM1440 317h1v1h-1zM1440 315h1v1h-1zM1440 313h1v1h-1zM1440 310h1v1h-1zM1440 308h1v1h-1zM1440 305h1v1h-1zM1440 303h1v1h-1zM1440 300h1v1h-1zM1440 297h1v1h-1zM1440 294h1v1h-1zM1440 291h1v1h-1zM1440 283h1v1h-1zM1440 278h1v1h-1zM1440 273h1v1h-1zM1440 267h1v1h-1zM1440 262h1v1h-1zM1440 256h1v1h-1zM1440 249h1v1h-1zM1440 243h1v1h-1zM1440 235h1v1h-1zM1440 220h1v1h-1zM1440 211h1v1h-1zM1440 202h1v1h-1zM1440 192h1v1h-1zM1440 182h1v1h-1zM1440 171h1v1h-1zM1440 160h1v1h-1zM1440 147h1v1h-1zM1440 134h1v1h-1zM1450 320h1v1h-1zM1450 318h1v1h-1zM1451 316h1v1h-1zM1451 314h1v1h-1zM1452 311h1v1h-1zM1453 309h1v1h-1zM1453 306h1v1h-1zM1454 304h1v1h-1zM1454 301h1v1h-1zM1455 298h1v1h-1zM1456 295h1v1h-1zM1457 292h1v1h-1zM1458 284h1v1h-1zM1460 279h1v1h-1zM1461 274h1v1h-1zM1462 269h1v1h-1zM1463 263h1v1h-1zM1465 257h1v1h-1zM1466 251h1v1h-1zM1468 244h1v1h-1zM1469 237h1v1h-1zM1473 222h1v1h-1zM1475 213h1v1h-1zM1477 204h1v1h-1zM1479 195h1v1h-1zM1482 185h1v1h-1zM1484 174h1v1h-1zM1487 163h1v1h-1zM1490 151h1v1h-1zM1493 138h1v1h-1zM1460 322h1v1h-1zM1461 320h1v1h-1zM1462 318h1v1h-1zM1463 316h1v1h-1zM1464 314h1v1h-1zM1465 311h1v1h-1zM1466 309h1v1h-1zM1468 306h1v1h-1zM1469 304h1v1h-1zM1470 301h1v1h-1zM1472 298h1v1h-1zM1473 295h1v1h-1zM1477 288h1v1h-1zM1479 283h1v1h-1zM1481 278h1v1h-1zM1484 273h1v1h-1zM1486 268h1v1h-1zM1489 262h1v1h-1zM1492 256h1v1h-1zM1495 250h1v1h-1zM1498 243h1v1h-1zM1506 228h1v1h-1zM1509 220h1v1h-1zM1514 212h1v1h-1zM1518 203h1v1h-1zM1523 193h1v1h-1zM1528 183h1v1h-1zM1533 172h1v1h-1zM1538 160h1v1h-1zM1544 148h1v1h-1zM1470 325h1v1h-1zM1471 323h1v1h-1zM1472 322h1v1h-1zM1474 320h1v1h-1zM1476 318h1v1h-1zM1477 316h1v1h-1zM1479 313h1v1h-1zM1481 311h1v1h-1zM1483 309h1v1h-1zM1484 306h1v1h-1zM1487 303h1v1h-1zM1489 301h1v1h-1zM1494 294h1v1h-1zM1497 290h1v1h-1zM1501 285h1v1h-1zM1504 280h1v1h-1zM1508 276h1v1h-1zM1512 270h1v1h-1zM1516 265h1v1h-1zM1521 259h1v1h-1zM1526 253h1v1h-1zM1536 239h1v1h-1zM1542 232h1v1h-1zM1548 224h1v1h-1zM1554 215h1v1h-1zM1561 206h1v1h-1zM1568 197h1v1h-1zM1576 187h1v1h-1zM1584 176h1v1h-1zM1593 165h1v1h-1zM1478 330h1v1h-1zM1480 328h1v1h-1zM1482 327h1v1h-1zM1484 325h1v1h-1zM1486 323h1v1h-1zM1488 321h1v1h-1zM1490 319h1v1h-1zM1492 317h1v1h-1zM1495 315h1v1h-1zM1497 313h1v1h-1zM1500 310h1v1h-1zM1503 308h1v1h-1zM1509 302h1v1h-1zM1514 298h1v1h-1zM1518 294h1v1h-1zM1523 290h1v1h-1zM1527 286h1v1h-1zM1533 281h1v1h-1zM1538 276h1v1h-1zM1544 271h1v1h-1zM1550 266h1v1h-1zM1564 253h1v1h-1zM1571 247h1v1h-1zM1579 240h1v1h-1zM1587 232h1v1h-1zM1596 225h1v1h-1zM1605 216h1v1h-1zM1615 207h1v1h-1zM1625 198h1v1h-1zM1637 188h1v1h-1zM1486 335h1v1h-1zM1488 334h1v1h-1zM1490 333h1v1h-1zM1492 331h1v1h-1zM1495 330h1v1h-1zM1497 328h1v1h-1zM1500 326h1v1h-1zM1503 325h1v1h-1zM1505 323h1v1h-1zM1508 321h1v1h-1zM1512 319h1v1h-1zM1515 317h1v1h-1zM1523 312h1v1h-1zM1528 309h1v1h-1zM1533 306h1v1h-1zM1539 302h1v1h-1zM1544 298h1v1h-1zM1551 295h1v1h-1zM1557 290h1v1h-1zM1564 286h1v1h-1zM1571 281h1v1h-1zM1587 271h1v1h-1zM1596 266h1v1h-1zM1605 260h1v1h-1zM1615 254h1v1h-1zM1626 247h1v1h-1zM1637 240h1v1h-1zM1649 233h1v1h-1zM1661 225h1v1h-1zM1674 217h1v1h-1zM1492 342h1v1h-1zM1494 341h1v1h-1zM1497 340h1v1h-1zM1499 339h1v1h-1zM1502 337h1v1h-1zM1505 336h1v1h-1zM1508 335h1v1h-1zM1511 334h1v1h-1zM1514 332h1v1h-1zM1517 331h1v1h-1zM1521 329h1v1h-1zM1525 328h1v1h-1zM1534 324h1v1h-1zM1539 321h1v1h-1zM1545 319h1v1h-1zM1551 316h1v1h-1zM1558 313h1v1h-1zM1565 310h1v1h-1zM1572 307h1v1h-1zM1580 304h1v1h-1zM1589 300h1v1h-1zM1607 292h1v1h-1zM1617 288h1v1h-1zM1627 283h1v1h-1zM1638 278h1v1h-1zM1650 273h1v1h-1zM1663 268h1v1h-1zM1676 262h1v1h-1zM1690 256h1v1h-1zM1705 249h1v1h-1zM1496 349h1v1h-1zM1499 348h1v1h-1zM1501 348h1v1h-1zM1504 347h1v1h-1zM1507 346h1v1h-1zM1510 345h1v1h-1zM1513 344h1v1h-1zM1517 343h1v1h-1zM1520 342h1v1h-1zM1524 341h1v1h-1zM1528 340h1v1h-1zM1532 339h1v1h-1zM1542 337h1v1h-1zM1548 335h1v1h-1zM1554 333h1v1h-1zM1561 331h1v1h-1zM1568 329h1v1h-1zM1576 327h1v1h-1zM1584 325h1v1h-1zM1592 323h1v1h-1zM1601 320h1v1h-1zM1621 315h1v1h-1zM1632 312h1v1h-1zM1643 309h1v1h-1zM1655 306h1v1h-1zM1668 302h1v1h-1zM1682 298h1v1h-1zM1696 294h1v1h-1zM1711 290h1v1h-1zM1728 286h1v1h-1zM1499 357h1v1h-1zM1502 356h1v1h-1zM1504 356h1v1h-1zM1507 356h1v1h-1zM1510 355h1v1h-1zM1514 355h1v1h-1zM1517 354h1v1h-1zM1521 354h1v1h-1zM1524 353h1v1h-1zM1528 353h1v1h-1zM1532 352h1v1h-1zM1536 352h1v1h-1zM1547 350h1v1h-1zM1553 349h1v1h-1zM1560 349h1v1h-1zM1567 348h1v1h-1zM1574 347h1v1h-1zM1582 346h1v1h-1zM1591 344h1v1h-1zM1600 343h1v1h-1zM1609 342h1v1h-1zM1630 339h1v1h-1zM1641 338h1v1h-1zM1653 336h1v1h-1zM1666 335h1v1h-1zM1679 333h1v1h-1zM1693 331h1v1h-1zM1708 329h1v1h-1zM1724 327h1v1h-1zM1741 325h1v1h-1zM1500 365h1v1h-1zM1503 365h1v1h-1zM1505 365h1v1h-1zM1508 365h1v1h-1zM1512 365h1v1h-1zM1515 365h1v1h-1zM1518 365h1v1h-1zM1522 365h1v1h-1zM1526 365h1v1h-1zM1529 365h1v1h-1zM1534 365h1v1h-1zM1538 365h1v1h-1zM1548 365h1v1h-1zM1555 365h1v1h-1zM1562 365h1v1h-1zM1569 365h1v1h-1zM1576 365h1v1h-1zM1584 365h1v1h-1zM1593 365h1v1h-1zM1602 365h1v1h-1zM1612 365h1v1h-1zM1633 365h1v1h-1zM1644 365h1v1h-1zM1656 365h1v1h-1zM1669 365h1v1h-1zM1683 365h1v1h-1zM1697 365h1v1h-1zM1713 365h1v1h-1zM1729 365h1v1h-1zM1746 365h1v1h-1z" fill="#000"/>
<path d="M1407.0 365.5A33.0 24.8 0 0 1 1473.0 365.5" fill="none" stroke="#000" stroke-width="1"/>
<path d="M1421.3 365.5A18.7 14.0 0 0 1 1458.7 365.5" fill="none" stroke="#000" stroke-width="1"/>
</svg>
</div>
<div class="lbl" style="left:440px;top:93px;width:80px;text-align:center;color:#000">X</div>
<div class="lbl" style="left:440px;top:126px;width:80px;text-align:center;color:#000">0</div>
<div class="lbl" style="left:440px;top:164px;width:80px;text-align:center;color:#000">-3</div>
<div class="lbl" style="left:440px;top:232px;width:80px;text-align:center;color:#000">-10</div>
<div class="lbl" style="left:440px;top:292px;width:80px;text-align:center;color:#000">-20</div>
<div class="lbl" style="left:440px;top:325.5px;width:80px;text-align:center;color:#000">-30</div>
<div class="lbl" style="left:1400px;top:93px;width:80px;text-align:center;color:#000">Z</div>
<div class="lbl" style="left:1400px;top:126px;width:80px;text-align:center;color:#000">0</div>
<div class="lbl" style="left:1400px;top:164px;width:80px;text-align:center;color:#000">-3</div>
<div class="lbl" style="left:1400px;top:232px;width:80px;text-align:center;color:#000">-10</div>
<div class="lbl" style="left:1400px;top:292px;width:80px;text-align:center;color:#000">-20</div>
<div class="lbl" style="left:1400px;top:325.5px;width:80px;text-align:center;color:#000">-30</div>
<div class="lbl" style="left:105px;top:353px;width:80px;text-align:center;color:#000">Y</div>
<div class="lbl" style="left:1734px;top:353px;width:80px;text-align:center;color:#000">X</div>
<div class="lbl" style="left:1115px;top:377px;color:#808080">3.47(dBi) = 0dB</div>
<div class="gb"></div>
<div class="lbl gbc" style="left:1062px;top:530px">Показать ДН для поляризации</div>
<div class="radio" style="left:1065px;top:581px"></div>
<div class="lbl" style="left:1086px;top:575px">V</div>
<div class="radio" style="left:1270px;top:581px"></div>
<div class="lbl" style="left:1291px;top:575px">H</div>
<div class="radio" style="left:1475px;top:581px"><i></i></div>
<div class="lbl" style="left:1496px;top:575px">Total</div>
<div class="radio" style="left:1680px;top:581px"></div>
<div class="lbl" style="left:1701px;top:575px">V+H</div>
<div class="btn" style="left:839px;top:645px;width:432px;height:52px"><span>Открыть *.mab файл</span></div>
<div class="btn" style="left:1293px;top:645px;width:185px;height:52px"><span>Очистить</span></div>
<div class="btnfocus" style="left:1500px;top:645px;width:185px;height:52px"></div>
<div class="btn" style="left:1501px;top:646px;width:183px;height:50px"><span style="top:12px">Цвет</span><b></b></div>
<div class="btn" style="left:1695px;top:645px;width:185px;height:52px"><span>Возврат</span></div>
<div class="grid">
<div class="hc" style="left:2px;width:98px">No.</div>
<div class="hc" style="left:101px;width:155px">F (МГц)</div>
<div class="hc" style="left:257px;width:150px">R</div>
<div class="hc" style="left:408px;width:150px">jX</div>
<div class="hc" style="left:559px;width:123px">КСВ</div>
<div class="hc" style="left:683px;width:120px">Gh</div>
<div class="hc" style="left:804px;width:120px">Ga</div>
<div class="hc" style="left:925px;width:120px">F/B</div>
<div class="hc" style="left:1046px;width:115px">Елев.</div>
<div class="hc" style="left:1162px;width:155px">Земля</div>
<div class="hc" style="left:1318px;width:143px">Высота</div>
<div class="hc" style="left:1462px;width:125px">Поляр.</div>
<div class="hc" style="left:1588px;width:180px">File</div>
<div class="hc" style="left:1769px;width:170px">Имя</div>
<div class="fc" style="top:49px;color:#00f">1</div>
<div class="fc" style="top:96px;color:#800000">2</div>
<div class="dc" style="left:101px;top:49px;width:156px;color:#00f">14.15</div>
<div class="dc" style="left:257px;top:49px;width:151px;color:#00f">46.289</div>
<div class="dc" style="left:408px;top:49px;width:151px;color:#00f">-209.506</div>
<div class="dc" style="left:559px;top:49px;width:124px;color:#00f">20.92</div>
<div class="dc" style="left:683px;top:49px;width:121px;color:#00f">---</div>
<div class="dc" style="left:804px;top:49px;width:121px;color:#00f">3.47</div>
<div class="dc" style="left:925px;top:49px;width:121px;color:#00f">-0.05</div>
<div class="dc" style="left:1046px;top:49px;width:116px;color:#00f">22.9</div>
<div class="dc" style="left:1162px;top:49px;width:156px;color:#00f">Реал.</div>
<div class="dc" style="left:1318px;top:49px;width:144px;color:#00f">1.0</div>
<div class="dc" style="left:1462px;top:49px;width:126px;color:#00f">Верт.</div>
<div class="dc" style="left:1588px;top:49px;width:181px;color:#00f">Текущ.</div>
<div class="dc" style="left:1769px;top:49px;width:171px;color:#00f">half</div>
<div class="dc" style="left:101px;top:96px;width:156px;color:#800000">14.15</div>
<div class="dc" style="left:257px;top:96px;width:151px;color:#800000">58.616</div>
<div class="dc" style="left:408px;top:96px;width:151px;color:#800000">-44.194</div>
<div class="dc" style="left:559px;top:96px;width:124px;color:#800000">2.25</div>
<div class="dc" style="left:683px;top:96px;width:121px;color:#800000">---</div>
<div class="dc" style="left:804px;top:96px;width:121px;color:#800000">2.7</div>
<div class="dc" style="left:925px;top:96px;width:121px;color:#800000">-0.1</div>
<div class="dc" style="left:1046px;top:96px;width:116px;color:#800000">23.7</div>
<div class="dc" style="left:1162px;top:96px;width:156px;color:#800000">Реал.</div>
<div class="dc" style="left:1318px;top:96px;width:144px;color:#800000">1.0</div>
<div class="dc" style="left:1462px;top:96px;width:126px;color:#800000">Верт.</div>
<div class="dc" style="left:1588px;top:96px;width:181px;color:#800000">D:\Прочее\Рабо</div>
<div class="dc" style="left:1769px;top:96px;width:171px;color:#800000">vp</div>
</div>
<div class="sbar"></div>
<div class="sbtn" style="left:2px"><svg width="16" height="16" viewBox="0 0 16 16" shape-rendering="crispEdges"><path d="M9 3v7h-1v-1h-1v-1h-1v-1h-1v-1h1v-1h1v-1h1v-1z" fill="#000"/></svg></div>
<div class="sbtn" style="left:18px"></div>
<div class="wline" style="top:1018px"></div>
<div id="tb">
<div class="start"><svg width="16" height="16" viewBox="1 2 12.500 11" preserveAspectRatio="none" style="position:absolute;left:1px;top:2px"><path d="M2 3q2.5-1.5 5 0v4q-2.5-1.5-5 0z" fill="#e8532b"/><path d="M8 3.5q2.5 1.5 5-.5v4q-2.5 2-5 .5z" fill="#7cbf3f"/><path d="M1.5 8q2.5-1.5 5 0v4q-2.5-1.5-5 0z" fill="#3a80d8"/><path d="M7.5 8.5q2.5 1.5 5-.5v4q-2.5 2-5 .5z" fill="#f6c130"/></svg><span>Пуск</span></div>
<svg class="ql" width="140" height="20" viewBox="0 0 140 20"><rect x="1" y="3" width="15" height="15" rx="1" fill="#1b3fd0"/><rect x="4" y="3" width="8" height="5" fill="#e8e8f8"/><rect x="3" y="10" width="11" height="8" fill="#f4f4f4"/><rect x="3" y="12" width="11" height="1.5" fill="#d8304a"/><rect x="3" y="15" width="11" height="1.5" fill="#d8304a"/><rect x="25" y="6" width="15" height="12" fill="#2a6fd0" stroke="#8fb4ea" stroke-width="1"/><rect x="30" y="15" width="9" height="2" fill="#222"/><rect x="26" y="14" width="4" height="3" fill="#e0a030"/><path d="M54 3l8 0-4.500 5 3.500 0-12 10 4-7-3.500 0z" fill="#f4e800" stroke="#222" stroke-width="1"/><circle cx="78" cy="11" r="8" fill="#e66a1e"/><circle cx="79" cy="10" r="4.6" fill="#2a52b8"/><path d="M71 9q2-6 8-5-4 2-3 5 2 1 1 4-5 0-6-4z" fill="#f29a2e"/><circle cx="101" cy="11" r="6.5" fill="none" stroke="#2a8be0" stroke-width="3.2"/><rect x="97" y="10" width="11" height="2.4" fill="#2a8be0"/><rect x="103" y="12" width="6" height="3" fill="#d4d0c8"/><path d="M93 17q-2-6 8-12 6-3 8 0" fill="none" stroke="#e8b020" stroke-width="1.6"/><circle cx="124" cy="11" r="8" fill="#f8f8f8"/><path d="M117 5l6 5v9h3v-9l6-5-3-1.5-4.5 4-4.5-4z" fill="#e81c24"/></svg>
<div class="tbtn" style="left:209px;width:160px"><svg width="16" height="16" viewBox="0 0 16 16" style="position:absolute;left:3px;top:2px"><circle cx="8" cy="8" r="7" fill="#3a8ae0"/><circle cx="8" cy="8" r="5" fill="#8fd0f0"/><text x="3" y="11.5" font-size="8" font-weight="bold" fill="#1a7a2a" font-family="Liberation Sans">Tc</text></svg><span>Total Commander 7.50a ...</span></div>
<div class="tbtn act" style="left:372px;width:160px"><svg width="16" height="16" viewBox="0 0 16 16" style="position:absolute;left:4px;top:3px"><g shape-rendering="crispEdges"><path d="M5 0h6v1h-6zM3 1h2v1h-2zM11 1h2v1h-2zM2 2h1v1h-1zM13 2h1v1h-1zM1 3h1v1h-1zM5 3h6v1h-6zM14 3h1v1h-1zM1 4h1v1h-1zM14 4h1v1h-1zM0 5h1v1h-1zM15 5h1v1h-1zM0 6h1v1h-1zM2 6h1v1h-1zM13 6h1v1h-1zM15 6h1v1h-1zM0 7h1v1h-1zM2 7h1v1h-1zM13 7h1v1h-1zM15 7h1v1h-1zM0 8h1v1h-1zM2 8h1v1h-1zM13 8h1v1h-1zM15 8h1v1h-1zM0 9h1v1h-1zM3 9h1v1h-1zM12 9h1v1h-1zM15 9h1v1h-1zM0 10h1v1h-1zM3 10h1v1h-1zM12 10h1v1h-1zM15 10h1v1h-1zM1 11h1v1h-1zM4 11h1v1h-1zM11 11h1v1h-1zM14 11h1v1h-1zM1 12h1v1h-1zM5 12h1v1h-1zM10 12h1v1h-1zM14 12h1v1h-1zM2 13h1v1h-1zM13 13h1v1h-1zM3 14h2v1h-2zM11 14h2v1h-2zM5 15h6v1h-6z" fill="#000"/><path d="M5 1h2v1h-2zM9 1h2v1h-2zM3 2h2v1h-2zM11 2h2v1h-2zM2 3h2v1h-2zM12 3h2v1h-2zM2 4h2v1h-2zM12 4h2v1h-2zM1 5h4v1h-4zM11 5h4v1h-4zM1 6h1v1h-1zM3 6h2v1h-2zM11 6h2v1h-2zM14 6h1v1h-1zM1 7h1v1h-1zM3 7h3v1h-3zM10 7h3v1h-3zM14 7h1v1h-1zM1 8h1v1h-1zM3 8h4v1h-4zM9 8h4v1h-4zM14 8h1v1h-1zM1 9h2v1h-2zM4 9h3v1h-3zM9 9h3v1h-3zM13 9h2v1h-2zM1 10h2v1h-2zM4 10h3v1h-3zM9 10h3v1h-3zM13 10h2v1h-2zM2 11h2v1h-2zM5 11h1v1h-1zM10 11h1v1h-1zM12 11h2v1h-2zM2 12h3v1h-3zM11 12h3v1h-3zM3 13h4v1h-4zM9 13h4v1h-4zM5 14h6v1h-6z" fill="#fff"/><path d="M7 1h2v1h-2zM5 2h2v1h-2zM9 2h2v1h-2zM4 3h1v1h-1zM11 3h1v1h-1zM4 4h1v1h-1zM11 4h1v1h-1zM5 5h1v1h-1zM10 5h1v1h-1zM5 6h1v1h-1zM10 6h1v1h-1zM6 7h1v1h-1zM9 7h1v1h-1zM7 9h2v1h-2zM7 10h2v1h-2zM6 11h1v1h-1zM9 11h1v1h-1zM6 12h1v1h-1zM9 12h1v1h-1zM7 13h2v1h-2z" fill="#00f"/><path d="M7 2h2v1h-2zM5 4h6v1h-6zM6 5h4v1h-4zM6 6h4v1h-4zM7 7h2v1h-2zM7 8h2v1h-2zM7 11h2v1h-2zM7 12h2v1h-2z" fill="#0ff"/></g></svg><span>Mmanagal1_2</span></div>
<div class="tt" style="left:1620px">Рабочий стол</div>
<svg style="position:absolute;left:1697px;top:1059px" width="8" height="5" viewBox="0 0 8 5" shape-rendering="crispEdges"><path d="M0 0h2v1h1v1h1v1h-1v1h-1v1h-2v-1h1v-1h1v-1h-1v-1h-1zM4 0h2v1h1v1h1v1h-1v1h-1v1h-2v-1h1v-1h1v-1h-1v-1h-1z" fill="#000"/></svg>
<div class="en">EN</div>
<div class="sep" style="left:1733px"></div>
<svg style="position:absolute;left:1741px;top:1058px" width="16" height="18" viewBox="0 0 16 18"><path d="M3 1.5h9.500q1.500 0 1.500 1.500v8q0 1.500-1.500 1.500h-1l0.500 2.500-3-2.500h-6q-1.500 0-1.500-1.500v-8q0-1.500 1.500-1.500z" fill="#ffffb0" stroke="#000" stroke-width="1.5"/><text x="4.2" y="11.5" font-size="11" font-weight="bold" fill="#0a1a8a" font-family="Liberation Sans">?</text></svg>
<div class="sep" style="left:1761px"></div>
<svg style="position:absolute;left:1767px;top:1056px" width="10" height="18" viewBox="0 0 10 18"><path d="M3.5 1.5h5v4h-5zM1.500 3.500h5v4h-5z" fill="#d4d0c8" stroke="#000" stroke-width="1"/><path d="M2 13h5l-2.500 3z" fill="#000"/></svg>
<div class="tray"></div>
<svg style="position:absolute;left:1786px;top:1057px" width="92" height="18" viewBox="0 0 92 18"><rect x="6" y="1" width="10" height="9" fill="#6a6a6a"/><rect x="1" y="4" width="10" height="9" fill="#8a8a8a" stroke="#555" stroke-width="1"/><rect x="4" y="14" width="5" height="2" fill="#777"/><path d="M20 7h3l4-4v12l-4-4h-3z" fill="#c8643c" stroke="#5a2a14" stroke-width="1"/><path d="M29.500 3q3 6 0 12M32 2q3 7 0 14" fill="none" stroke="#222" stroke-width="1.2"/><rect x="37" y="1" width="16" height="16" rx="3" fill="#e8202c"/><circle cx="45" cy="9" r="5.500" fill="#fff"/><circle cx="45" cy="9" r="3.200" fill="#e85a20"/><path d="M55 7h3l4-5v14l-4-5h-3z" fill="#e8e8f0" stroke="#8a8a9a" stroke-width="1"/><circle cx="66" cy="13" r="4" fill="#e8202c"/><path d="M64.300 11.300l3.400 3.400M67.700 11.300l-3.400 3.400" stroke="#fff" stroke-width="1.300"/><rect x="80" y="4" width="9" height="11" fill="#76b900"/><path d="M73 9q4-5 9-3v2q-3-1-6 1 3 3 6 2v2q-5 1-9-4z" fill="#76b900"/></svg>
<div class="tt" style="left:1883px">11:50</div>
</div>
</body></html>
